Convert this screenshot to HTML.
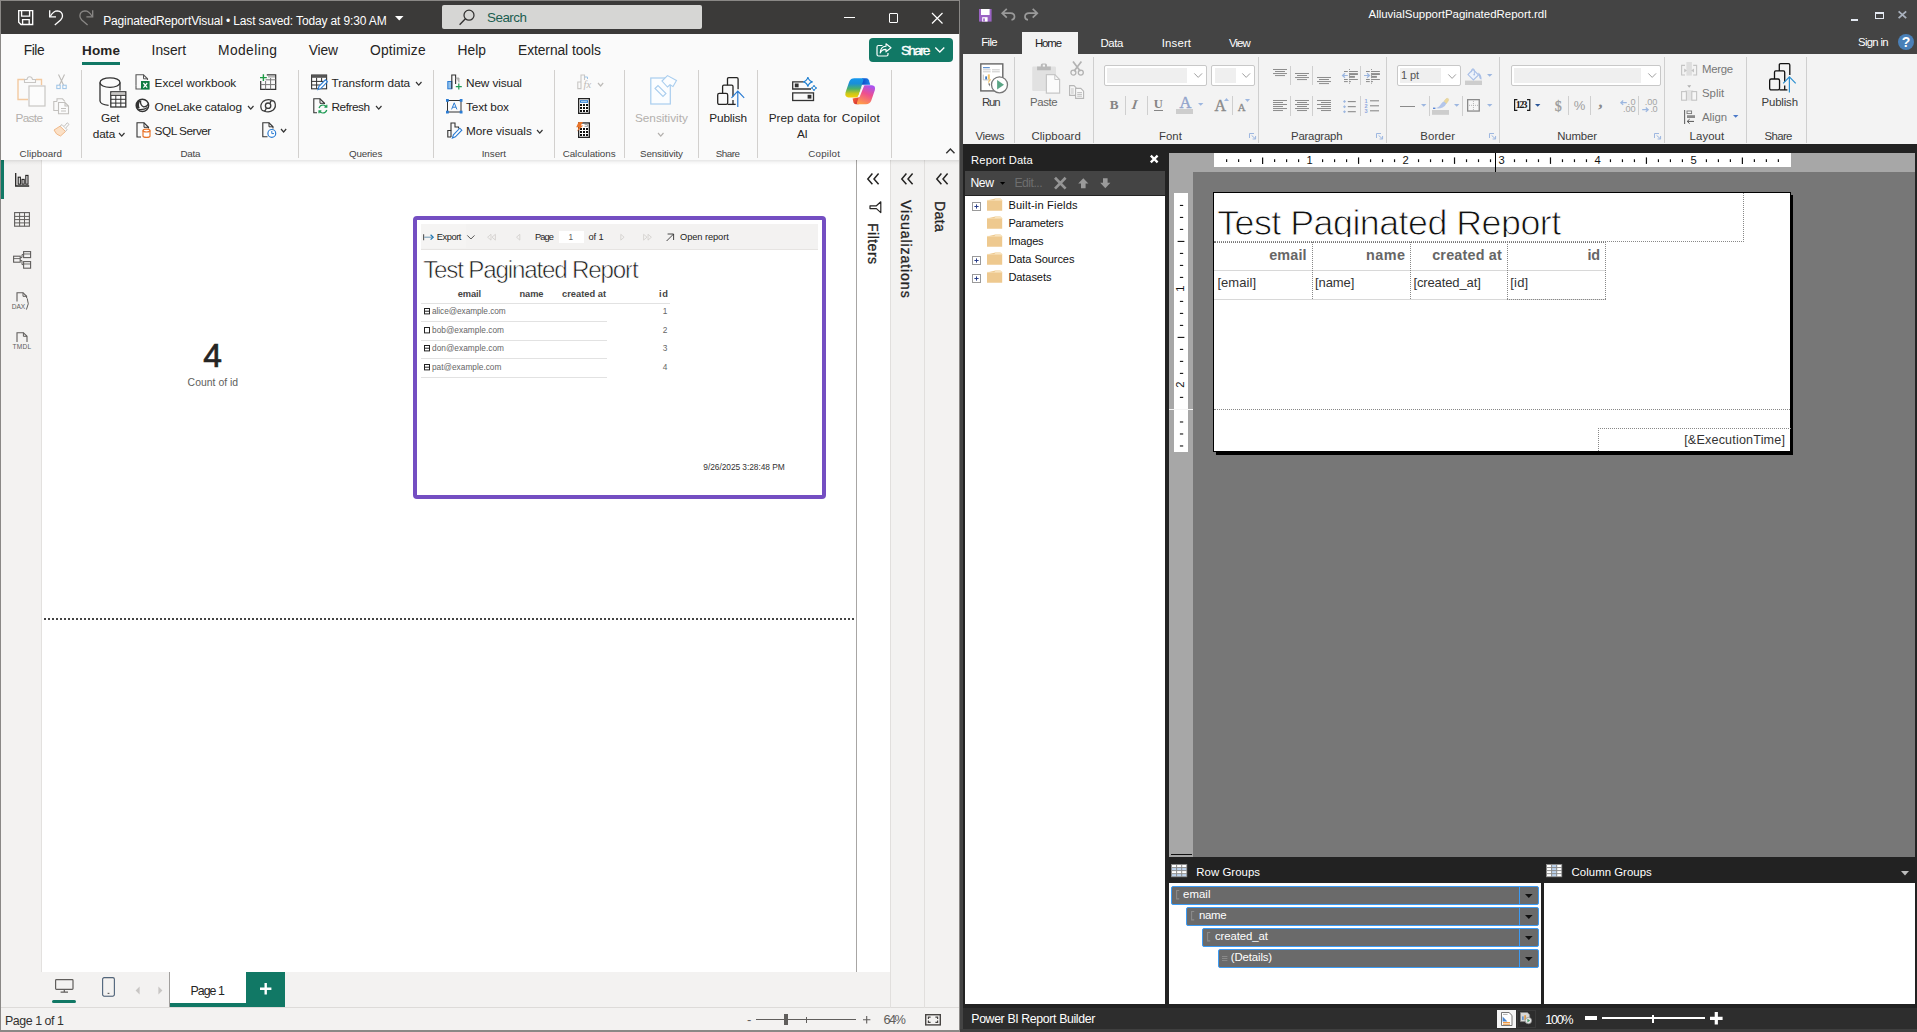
<!DOCTYPE html>
<html lang="en"><head><meta charset="utf-8"><title>Power BI Desktop and Report Builder</title>
<style>
html,body{margin:0;padding:0;}
body{width:1917px;height:1032px;position:relative;overflow:hidden;background:#fff;font-family:"Liberation Sans",sans-serif;}
#root{position:absolute;left:0;top:0;width:1917px;height:1032px;overflow:hidden;}
#root div,#root span,#root svg{position:absolute;}
.t{white-space:nowrap;line-height:1;}
svg{overflow:visible;}
</style></head><body><div id="root">
<div style="left:0px;top:0px;width:960px;height:1032px;background:#fff;"></div>
<div style="left:0px;top:0px;width:960px;height:34px;background:#3b3a39;"></div>
<div style="left:0px;top:0px;width:960px;height:1px;background:#8a8886;"></div>
<svg style="left:17.8px;top:9.9px;" width="15.4" height="15.2" viewBox="0 0 15.4 15.2"><path d="M0.7 0.7 H14.7 V14.5 H3 L0.7 12.2 Z M3.6 0.7 V6.2 H11.6 V0.7 M4.6 14.5 V9.6 H11.2 V14.5" fill="none" stroke="#fff" stroke-width="1.35"/></svg>
<svg style="left:49px;top:10px;" width="14.4" height="15.4" viewBox="0 0 14.4 15.4"><path d="M0.7 0.2 V6.9 H7" fill="none" stroke="#fff" stroke-width="1.3"/><path d="M1.4 6.2 Q4.4 0.9 8.4 0.9 Q13.5 1.4 13.5 6 Q13.5 8 11.6 10 L5.8 14.9" fill="none" stroke="#fff" stroke-width="1.3"/></svg>
<svg style="left:79px;top:10px;" width="14.4" height="15.4" viewBox="0 0 14.4 15.4"><path d="M13.7 0.2 V6.9 H7.4" fill="none" stroke="#8a8886" stroke-width="1.3"/><path d="M13 6.2 Q10 0.9 6 0.9 Q0.9 1.4 0.9 6 Q0.9 8 2.8 10 L8.6 14.9" fill="none" stroke="#8a8886" stroke-width="1.3"/></svg>
<span class="t" style="left:103.20px;top:15.00px;font-size:12.0px;color:#fff;font-family:'Liberation Sans',sans-serif;letter-spacing:-0.140px;">PaginatedReportVisual • Last saved: Today at 9:30 AM</span>
<svg style="left:394.5px;top:15.5px;" width="9" height="5" viewBox="0 0 9 5"><path d="M0 0 H8.5 L4.25 4.6 Z" fill="#fff"/></svg>
<div style="left:442px;top:5px;width:260px;height:24px;background:#d6d6d4;border-radius:2px;"></div>
<svg style="left:458px;top:8.6px;" width="18" height="17" viewBox="0 0 18 17"><circle cx="11" cy="6.2" r="5" fill="none" stroke="#323130" stroke-width="1.25"/><path d="M7.4 9.8 L1.6 15.8" stroke="#323130" stroke-width="1.35"/></svg>
<span class="t" style="left:487.00px;top:11.00px;font-size:13.4px;color:#1b5e50;font-family:'Liberation Sans',sans-serif;letter-spacing:-0.492px;">Search</span>
<div style="left:844px;top:17px;width:11px;height:1px;background:#fff;"></div>
<div style="left:888.5px;top:13px;width:9.5px;height:9.5px;border:1.2px solid #fff;box-sizing:border-box;border-radius:1px;"></div>
<svg style="left:932px;top:13px;" width="10.5" height="10.5" viewBox="0 0 10.5 10.5"><path d="M0 0 L10.5 10.5 M10.5 0 L0 10.5" stroke="#fff" stroke-width="1.2"/></svg>
<div style="left:1px;top:34px;width:958px;height:126px;background:#fafafa;"></div>
<span class="t" style="left:23.80px;top:44.00px;font-size:13.8px;color:#252423;font-family:'Liberation Sans',sans-serif;letter-spacing:-0.479px;">File</span>
<span class="t" style="left:82.00px;top:44.00px;font-size:13.5px;color:#252423;font-family:'Liberation Sans',sans-serif;font-weight:700;letter-spacing:0.164px;">Home</span>
<span class="t" style="left:151.60px;top:44.00px;font-size:13.8px;color:#252423;font-family:'Liberation Sans',sans-serif;letter-spacing:-0.023px;">Insert</span>
<span class="t" style="left:218.00px;top:44.00px;font-size:13.8px;color:#252423;font-family:'Liberation Sans',sans-serif;letter-spacing:0.428px;">Modeling</span>
<span class="t" style="left:308.80px;top:44.00px;font-size:13.8px;color:#252423;font-family:'Liberation Sans',sans-serif;letter-spacing:-0.154px;">View</span>
<span class="t" style="left:370.00px;top:44.00px;font-size:13.8px;color:#252423;font-family:'Liberation Sans',sans-serif;letter-spacing:0.165px;">Optimize</span>
<span class="t" style="left:457.40px;top:44.00px;font-size:13.8px;color:#252423;font-family:'Liberation Sans',sans-serif;letter-spacing:0.073px;">Help</span>
<span class="t" style="left:518.00px;top:44.00px;font-size:13.8px;color:#252423;font-family:'Liberation Sans',sans-serif;letter-spacing:-0.062px;">External tools</span>
<div style="left:82px;top:62px;width:38px;height:3px;background:#117865;"></div>
<div style="left:869px;top:38px;width:84px;height:24px;background:#117865;border-radius:4px;"></div>
<svg style="left:876px;top:42.5px;" width="16" height="14" viewBox="0 0 16 14"><path d="M6.5 2.5 H2.5 Q1 2.5 1 4 V11.5 Q1 13 2.5 13 H10.5 Q12 13 12 11.5 V10" fill="none" stroke="#fff" stroke-width="1.2"/><path d="M10 0.8 L15 4.8 L10 8.8 V6.4 Q6 6.2 4.2 10 Q4.4 3.6 10 3.2 Z" fill="none" stroke="#fff" stroke-width="1.1" stroke-linejoin="round"/></svg>
<span class="t" style="left:901.00px;top:44.00px;font-size:13.7px;color:#fff;font-family:'Liberation Sans',sans-serif;letter-spacing:-1.790px;-webkit-text-stroke:0.35px #fff;">Share</span>
<svg style="left:935.4px;top:47px;" width="10" height="6" viewBox="0 0 10 6"><path d="M0.3 0.5 L4.8 5 L9.3 0.5" fill="none" stroke="#fff" stroke-width="1.3"/></svg>
<div style="left:81.0px;top:70px;width:1px;height:88px;background:#d2d0ce;"></div>
<div style="left:298.1px;top:70px;width:1px;height:88px;background:#d2d0ce;"></div>
<div style="left:432.8px;top:70px;width:1px;height:88px;background:#d2d0ce;"></div>
<div style="left:554.0px;top:70px;width:1px;height:88px;background:#d2d0ce;"></div>
<div style="left:624.1px;top:70px;width:1px;height:88px;background:#d2d0ce;"></div>
<div style="left:698.3px;top:70px;width:1px;height:88px;background:#d2d0ce;"></div>
<div style="left:757.2px;top:70px;width:1px;height:88px;background:#d2d0ce;"></div>
<div style="left:890.5px;top:70px;width:1px;height:88px;background:#d2d0ce;"></div>
<span class="t" style="left:19.50px;top:149.00px;font-size:9.8px;color:#444;font-family:'Liberation Sans',sans-serif;letter-spacing:0.069px;">Clipboard</span>
<span class="t" style="left:180.50px;top:149.00px;font-size:9.8px;color:#444;font-family:'Liberation Sans',sans-serif;letter-spacing:-0.234px;">Data</span>
<span class="t" style="left:349.00px;top:149.00px;font-size:9.8px;color:#444;font-family:'Liberation Sans',sans-serif;letter-spacing:-0.169px;">Queries</span>
<span class="t" style="left:481.70px;top:149.00px;font-size:9.8px;color:#444;font-family:'Liberation Sans',sans-serif;letter-spacing:-0.042px;">Insert</span>
<span class="t" style="left:562.70px;top:149.00px;font-size:9.8px;color:#444;font-family:'Liberation Sans',sans-serif;letter-spacing:-0.044px;">Calculations</span>
<span class="t" style="left:640.00px;top:149.00px;font-size:9.8px;color:#444;font-family:'Liberation Sans',sans-serif;letter-spacing:-0.111px;">Sensitivity</span>
<span class="t" style="left:715.80px;top:149.00px;font-size:9.8px;color:#444;font-family:'Liberation Sans',sans-serif;letter-spacing:-0.488px;">Share</span>
<span class="t" style="left:808.30px;top:149.00px;font-size:9.8px;color:#444;font-family:'Liberation Sans',sans-serif;letter-spacing:0.199px;">Copilot</span>
<svg style="left:945.7px;top:147.5px;" width="9" height="6" viewBox="0 0 9 6"><path d="M0.3 5.2 L4.4 1 L8.5 5.2" fill="none" stroke="#333" stroke-width="1.4"/></svg>
<svg style="left:17px;top:76px;" width="29" height="31" viewBox="0 0 29 31"><path d="M8 3.5 H1 V23.5 H11" fill="none" stroke="#f3c9a0" stroke-width="1.4"/><path d="M19 3.5 H24.5 V9" fill="none" stroke="#f3c9a0" stroke-width="1.4"/><path d="M7.5 6.5 V3.5 H10 Q10.5 0.8 12.7 0.8 Q15 0.8 15.5 3.5 H18.5 V6.5 Z" fill="#fafafa" stroke="#c8c6c4" stroke-width="1.1"/><rect x="12" y="10" width="16" height="20" fill="#fcfcfc" stroke="#c8c6c4" stroke-width="1.2"/></svg>
<span class="t" style="left:15.50px;top:113.00px;font-size:11.8px;color:#b3b0ad;font-family:'Liberation Sans',sans-serif;letter-spacing:-0.669px;">Paste</span>
<svg style="left:55.5px;top:74px;" width="11" height="16" viewBox="0 0 11 16"><path d="M2.5 0.5 L7.5 11 M8.5 0.5 L3.5 11" stroke="#bdbbb8" stroke-width="1.1" fill="none"/><rect x="0.8" y="11.2" width="3.4" height="3.4" fill="none" stroke="#9cc3e6" stroke-width="1"/><rect x="6.8" y="11.2" width="3.4" height="3.4" fill="none" stroke="#9cc3e6" stroke-width="1"/></svg>
<svg style="left:53px;top:98px;" width="17" height="17" viewBox="0 0 17 17"><path d="M4 3.5 V0.8 H9.5 L12 3.5 M4 3.5 H0.8 V12.5 H5" fill="none" stroke="#c2c0bd" stroke-width="1.1"/><path d="M5.5 4.5 H12 L15.5 8 V15.8 H5.5 Z M12 4.5 V8 H15.5" fill="#fbfbfb" stroke="#c2c0bd" stroke-width="1.1"/><path d="M8 10.5 H13 M8 13 H13" stroke="#c2c0bd" stroke-width="1"/></svg>
<svg style="left:53px;top:122px;" width="17" height="15" viewBox="0 0 17 15"><path d="M1 8 L7 4.2 L12.5 9.5 L7.5 14 Q3 13 1 8 Z" fill="#fbe0c6" stroke="#f0b98a" stroke-width="1"/><path d="M7 4.2 L9 2.6 L14 7.6 L12.5 9.5" fill="none" stroke="#c2c0bd" stroke-width="1"/><path d="M11 4.6 L14.2 0.8 L16 2.4 L12.6 6.2" fill="#fbfbfb" stroke="#c2c0bd" stroke-width="1"/></svg>
<svg style="left:98.6px;top:76.5px;" width="29" height="31" viewBox="0 0 29 31"><path d="M1 5.6 V24 Q1.4 27.6 9.6 28.4" fill="none" stroke="#333" stroke-width="1.3"/><ellipse cx="11" cy="5.6" rx="10" ry="4.8" fill="none" stroke="#333" stroke-width="1.3"/><path d="M21 5.6 V13.4" fill="none" stroke="#333" stroke-width="1.3"/><rect x="11.8" y="14.8" width="15" height="15.2" fill="#fdfdfd" stroke="#333" stroke-width="1.3"/><rect x="12.5" y="15.5" width="13.6" height="2.4" fill="#c8c6c4"/><path d="M11.8 18.4 H26.8 M11.8 22.3 H26.8 M11.8 26.1 H26.8 M16.8 18.4 V30 M21.8 18.4 V30" stroke="#333" stroke-width="1"/></svg>
<span class="t" style="left:101.00px;top:113.00px;font-size:11.8px;color:#252423;font-family:'Liberation Sans',sans-serif;letter-spacing:-0.260px;">Get</span>
<span class="t" style="left:92.70px;top:129.00px;font-size:11.8px;color:#252423;font-family:'Liberation Sans',sans-serif;letter-spacing:-0.122px;">data</span>
<svg style="left:119px;top:132.6px;" width="5.5" height="3.2" viewBox="0 0 5.5 3.2"><path d="M0 0 L2.75 3.2 L5.5 0" fill="none" stroke="#333" stroke-width="1.2"/></svg>
<svg style="left:135.2px;top:74.3px;" width="15" height="16" viewBox="0 0 15 16"><path d="M1 11.5 V0.8 H8.5 L12.5 4.8 V6" fill="none" stroke="#555" stroke-width="1.1"/><path d="M8.5 0.8 V4.8 H12.5" fill="none" stroke="#555" stroke-width="1"/><path d="M1 11.5 V15 H6" fill="none" stroke="#555" stroke-width="1.1"/><rect x="6" y="7" width="8.6" height="8.6" fill="#107c41"/><path d="M8.4 9 L12.2 13.6 M12.2 9 L8.4 13.6" stroke="#fff" stroke-width="1.2"/></svg>
<span class="t" style="left:154.60px;top:78.00px;font-size:11.8px;color:#252423;font-family:'Liberation Sans',sans-serif;letter-spacing:-0.072px;">Excel workbook</span>
<svg style="left:134.6px;top:98.4px;" width="15.5" height="15.5" viewBox="0 0 15.5 15.5"><circle cx="7.4" cy="7.4" r="6.2" fill="none" stroke="#333" stroke-width="1.5"/><path d="M4.4 2.4 Q1.6 6 3.6 10.4" fill="none" stroke="#333" stroke-width="2.4"/><path d="M5.6 2.6 Q5 7.4 8.6 8.8 Q11.6 9 13.4 6.2" fill="none" stroke="#333" stroke-width="1.3"/><path d="M3.4 11.4 Q8 12.4 12.6 9.4" fill="none" stroke="#333" stroke-width="1.2"/></svg>
<span class="t" style="left:154.60px;top:102.00px;font-size:11.8px;color:#252423;font-family:'Liberation Sans',sans-serif;letter-spacing:-0.130px;">OneLake catalog</span>
<svg style="left:247.5px;top:106.2px;" width="5.5" height="3.2" viewBox="0 0 5.5 3.2"><path d="M0 0 L2.75 3.2 L5.5 0" fill="none" stroke="#333" stroke-width="1.2"/></svg>
<svg style="left:136px;top:122.3px;" width="15" height="16" viewBox="0 0 15 16"><path d="M5 15 H1 V0.8 H8 L12.5 5.3 V6.5" fill="none" stroke="#333" stroke-width="1.1"/><path d="M8 0.8 V5.3 H12.5" fill="none" stroke="#333" stroke-width="1"/><path d="M7 8.6 V14 Q7 15.4 10.5 15.4 Q14 15.4 14 14 V8.6" fill="#fff" stroke="#e8742a" stroke-width="1.2"/><ellipse cx="10.5" cy="8.6" rx="3.5" ry="1.4" fill="#fff" stroke="#e8742a" stroke-width="1.2"/></svg>
<span class="t" style="left:154.60px;top:126.00px;font-size:11.8px;color:#252423;font-family:'Liberation Sans',sans-serif;letter-spacing:-0.501px;">SQL Server</span>
<svg style="left:260px;top:74px;" width="16.4" height="16" viewBox="0 0 16.4 16"><path d="M6.8 0.8 H15.7 V15.4 H0.7 V7" fill="none" stroke="#333" stroke-width="1.2"/><path d="M8 2.6 H15" stroke="#b8b8b8" stroke-width="2"/><path d="M0.7 10.6 H15.7 M5.6 7 V15.4 M10.6 4 V15.4 M5.6 5.8 H15.7" stroke="#777" stroke-width="1"/><path d="M3.4 0.2 V7 M0 3.6 H6.8" stroke="#1f9b45" stroke-width="1.4"/></svg>
<svg style="left:260px;top:99px;" width="16.4" height="13.6" viewBox="0 0 16.4 13.6"><circle cx="8.1" cy="6.7" r="2.7" fill="none" stroke="#3a3a3a" stroke-width="1.3"/><path d="M12.2 1.4 Q7 -0.6 3 2.6 Q-0.4 6 1.4 10.2 Q2.6 12.6 5 11.6 Q6.4 10.8 5.6 9.4" fill="none" stroke="#3a3a3a" stroke-width="1.3"/><path d="M4 12 Q9.2 14.2 13.2 11 Q16.6 7.6 14.8 3.4 Q13.6 1 11.2 2 Q9.8 2.8 10.6 4.2" fill="none" stroke="#3a3a3a" stroke-width="1.3"/></svg>
<svg style="left:262px;top:122.3px;" width="15" height="16" viewBox="0 0 15 16"><path d="M5.5 14.8 H0.8 V0.8 H7 L11 4.8 V6.5" fill="none" stroke="#333" stroke-width="1.1"/><path d="M7 0.8 V4.8 H11" fill="none" stroke="#333" stroke-width="1"/><circle cx="9.8" cy="11.4" r="3.9" fill="#fff" stroke="#2b7cd3" stroke-width="1.2"/><path d="M9.8 9 V11.6 H12" fill="none" stroke="#2b7cd3" stroke-width="1"/></svg>
<svg style="left:281px;top:128.8px;" width="5.2" height="3" viewBox="0 0 5.2 3"><path d="M0 0 L2.6 3 L5.2 0" fill="none" stroke="#333" stroke-width="1.2"/></svg>
<svg style="left:310.8px;top:74px;" width="17" height="16" viewBox="0 0 17 16"><rect x="0.6" y="1" width="15" height="13.8" fill="#fcfcfc" stroke="#333" stroke-width="1.1"/><rect x="0.6" y="1" width="15" height="2.8" fill="#555"/><path d="M0.6 7.4 H15.6 M0.6 11 H9 M5.6 3.8 V14.8 M10.6 3.8 V8" stroke="#333" stroke-width="1"/><path d="M7 15.6 L8 12.4 L14.4 5.8 L16.4 7.8 L10 14.4 Z" fill="#fff" stroke="#2b7cd3" stroke-width="1.1"/></svg>
<span class="t" style="left:331.50px;top:78.00px;font-size:11.8px;color:#252423;font-family:'Liberation Sans',sans-serif;letter-spacing:-0.067px;">Transform data</span>
<svg style="left:416px;top:82px;" width="5.5" height="3.2" viewBox="0 0 5.5 3.2"><path d="M0 0 L2.75 3.2 L5.5 0" fill="none" stroke="#333" stroke-width="1.2"/></svg>
<svg style="left:312.7px;top:98.3px;" width="15" height="16" viewBox="0 0 15 16"><path d="M4 14.8 H0.8 V0.8 H7 L11.5 5.3 V6" fill="none" stroke="#333" stroke-width="1.1"/><path d="M7 0.8 V5.3 H11.5" fill="none" stroke="#333" stroke-width="1"/><path d="M6 10 Q7 7 10 7 Q12.4 7 13.4 9 M13.8 6.8 V9.2 H11.4" fill="none" stroke="#1f9b55" stroke-width="1.2"/><path d="M13.8 12 Q12.8 15 9.8 15 Q7.4 15 6.4 13 M6 15.2 V12.8 H8.4" fill="none" stroke="#1f9b55" stroke-width="1.2"/></svg>
<span class="t" style="left:331.50px;top:102.00px;font-size:11.8px;color:#252423;font-family:'Liberation Sans',sans-serif;letter-spacing:-0.470px;">Refresh</span>
<svg style="left:375.6px;top:106.2px;" width="5.5" height="3.2" viewBox="0 0 5.5 3.2"><path d="M0 0 L2.75 3.2 L5.5 0" fill="none" stroke="#333" stroke-width="1.2"/></svg>
<svg style="left:446.5px;top:74px;" width="16" height="16" viewBox="0 0 16 16"><rect x="0.8" y="7.5" width="4" height="7.3" fill="#8fc0ec" stroke="#2b7cd3" stroke-width="1"/><path d="M4.8 14.8 V1 H8.6 V10" fill="none" stroke="#333" stroke-width="1.1"/><path d="M8.6 4 H12 V8.5" fill="#c8c6c4" stroke="#999" stroke-width="0.8"/><path d="M11.8 9.6 V15.6 M8.8 12.6 H14.8" stroke="#1f9b55" stroke-width="1.2"/></svg>
<span class="t" style="left:466.00px;top:78.00px;font-size:11.8px;color:#252423;font-family:'Liberation Sans',sans-serif;letter-spacing:-0.117px;">New visual</span>
<svg style="left:446px;top:98.8px;" width="17" height="14.5" viewBox="0 0 17 14.5"><rect x="1.5" y="1.5" width="13.5" height="11.5" fill="none" stroke="#333" stroke-width="1"/><rect x="0" y="0" width="2.8" height="2.8" fill="#2b7cd3"/><rect x="13.7" y="0" width="2.8" height="2.8" fill="#2b7cd3"/><rect x="0" y="11.7" width="2.8" height="2.8" fill="#2b7cd3"/><rect x="13.7" y="11.7" width="2.8" height="2.8" fill="#2b7cd3"/><path d="M5.6 10.4 L8.25 3.8 L10.9 10.4 M6.6 8.2 H9.9" fill="none" stroke="#2b7cd3" stroke-width="1"/></svg>
<span class="t" style="left:466.00px;top:102.00px;font-size:11.8px;color:#252423;font-family:'Liberation Sans',sans-serif;letter-spacing:-0.135px;">Text box</span>
<svg style="left:446.5px;top:122px;" width="16" height="16.5" viewBox="0 0 16 16.5"><path d="M4 15 H0.8 V8.5 H4 V1 H8 V5 H11.5 V6.5" fill="none" stroke="#333" stroke-width="1.1"/><path d="M4 8.5 V15" stroke="#333" stroke-width="1.1"/><path d="M5.4 16 L6.4 12.8 L12.8 6.2 L14.8 8.2 L8.4 14.8 Z" fill="#fff" stroke="#2b7cd3" stroke-width="1.1"/></svg>
<span class="t" style="left:466.00px;top:126.00px;font-size:11.8px;color:#252423;font-family:'Liberation Sans',sans-serif;letter-spacing:-0.039px;">More visuals</span>
<svg style="left:536.8px;top:130px;" width="5.5" height="3.2" viewBox="0 0 5.5 3.2"><path d="M0 0 L2.75 3.2 L5.5 0" fill="none" stroke="#333" stroke-width="1.2"/></svg>
<svg style="left:577px;top:74px;" width="15" height="16" viewBox="0 0 15 16"><path d="M0.8 14.6 V8 H4 V14.6 Z M4 14.6 V1 H7.5 V6" fill="none" stroke="#c8c6c4" stroke-width="1.1"/><path d="M7.5 3 H10.5 V5" fill="none" stroke="#9cc3e6" stroke-width="1"/></svg>
<span class="t" style="left:583.50px;top:80.00px;font-size:10.5px;color:#bdbbb8;font-family:'Liberation Serif',serif;font-style:italic;">fx</span>
<svg style="left:598px;top:82.5px;" width="5.2" height="3" viewBox="0 0 5.2 3"><path d="M0 0 L2.6 3 L5.2 0" fill="none" stroke="#bdbbb8" stroke-width="1.2"/></svg>
<svg style="left:578px;top:98px;" width="12" height="16" viewBox="0 0 12 16"><rect x="0.65" y="0.65" width="10.7" height="14.7" fill="#fff" stroke="#222" stroke-width="1.3"/><rect x="2" y="2.2" width="8" height="2.6" fill="#2b7cd3"/><rect x="3" y="3" width="6" height="1" fill="#9cc8f0"/><g shape-rendering="crispEdges"><rect x="2" y="6" width="2" height="2" fill="#111"/><rect x="5" y="6" width="2" height="2" fill="#111"/><rect x="8" y="6" width="2" height="2" fill="#111"/><rect x="2" y="9" width="2" height="2" fill="#111"/><rect x="5" y="9" width="2" height="2" fill="#111"/><rect x="8" y="9" width="2" height="2" fill="#111"/><rect x="2" y="12" width="2" height="2" fill="#111"/><rect x="5" y="12" width="2" height="2" fill="#111"/><rect x="8" y="12" width="2" height="2" fill="#111"/></g></svg>
<svg style="left:576px;top:122px;" width="14" height="16" viewBox="0 0 14 16"><rect x="2.65" y="0.95" width="10.7" height="14.4" fill="#fff" stroke="#222" stroke-width="1.3"/><path d="M8.6 2.6 H11.6 V4.4 H8.6" fill="none" stroke="#888" stroke-width="0.8"/><g shape-rendering="crispEdges"><rect x="4" y="6" width="2" height="2" fill="#111"/><rect x="7" y="6" width="2" height="2" fill="#111"/><rect x="10" y="6" width="2" height="2" fill="#111"/><rect x="4" y="9" width="2" height="2" fill="#111"/><rect x="7" y="9" width="2" height="2" fill="#111"/><rect x="10" y="9" width="2" height="2" fill="#111"/><rect x="4" y="12" width="2" height="2" fill="#111"/><rect x="7" y="12" width="2" height="2" fill="#111"/><rect x="10" y="12" width="2" height="2" fill="#111"/></g><path d="M2.6 0 H7 L4.8 3.4 H7.2 L1.2 9.4 L2.6 5.2 H0.2 Z" fill="#e8742a"/></svg>
<svg style="left:650px;top:75px;" width="28" height="30" viewBox="0 0 28 30"><rect x="0.8" y="3" width="19.5" height="26" fill="#fbfdff" stroke="#a9cdee" stroke-width="1.2"/><path d="M5 13.5 L8 10.5 L16 18.5 L13 21.5 Z" fill="none" stroke="#a9cdee" stroke-width="1.1"/><path d="M12 6 L17.5 0.6 L26.5 5.5 L23 11.6 L20 9.8 L17.5 12 Z" fill="#fbfdff" stroke="#a9cdee" stroke-width="1.1"/></svg>
<span class="t" style="left:635.00px;top:113.00px;font-size:11.8px;color:#b3b0ad;font-family:'Liberation Sans',sans-serif;letter-spacing:-0.032px;">Sensitivity</span>
<svg style="left:658px;top:133px;" width="5.5" height="3.2" viewBox="0 0 5.5 3.2"><path d="M0 0 L2.75 3.2 L5.5 0" fill="none" stroke="#b3b0ad" stroke-width="1.2"/></svg>
<svg style="left:716.6px;top:77px;" width="28.4" height="30.6" viewBox="0 0 28.4 30.6"><path d="M10.5 8.2 V2 Q10.5 0.7 11.8 0.7 H19.8 Q21.1 0.7 21.1 2 V12.2" fill="none" stroke="#252423" stroke-width="1.3"/><path d="M5.6 16.3 V9.4 Q5.6 8.1 6.9 8.1 H14.7 Q16 8.1 16 9.4 V19.4 M16 23 V27.4" fill="none" stroke="#252423" stroke-width="1.3"/><rect x="0.7" y="16.3" width="10" height="11.1" rx="1.6" fill="none" stroke="#252423" stroke-width="1.3"/><path d="M10.7 27.4 H18.7" stroke="#252423" stroke-width="1.3"/><path d="M20.8 30 V14.2 M14.5 20.8 L20.8 14.1 L27.2 20.8" fill="none" stroke="#2b7cd3" stroke-width="1.2"/></svg>
<span class="t" style="left:709.30px;top:113.00px;font-size:11.8px;color:#252423;font-family:'Liberation Sans',sans-serif;letter-spacing:-0.167px;">Publish</span>
<svg style="left:792px;top:77px;" width="25" height="25" viewBox="0 0 25 25"><path d="M11.6 4.8 H0.7 V12 H19" fill="none" stroke="#333" stroke-width="1.3"/><rect x="2.8" y="6.5" width="3.8" height="3.8" fill="#333"/><rect x="0.7" y="15.9" width="20.8" height="7.6" fill="none" stroke="#333" stroke-width="1.3"/><rect x="15.6" y="17.8" width="3.8" height="3.8" fill="#333"/><path d="M15.9 0.2 Q16.7 4 20.6 4.9 Q16.7 5.8 15.9 9.6 Q15.1 5.8 11.2 4.9 Q15.1 4 15.9 0.2 Z" fill="#fafafa" stroke="#1f7fd0" stroke-width="1.1"/><path d="M22 8.2 Q22.5 10.5 24.8 11 Q22.5 11.5 22 13.8 Q21.5 11.5 19.2 11 Q21.5 10.5 22 8.2 Z" fill="#fafafa" stroke="#1f7fd0" stroke-width="1"/></svg>
<span class="t" style="left:768.70px;top:113.00px;font-size:11.8px;color:#252423;font-family:'Liberation Sans',sans-serif;letter-spacing:0.007px;">Prep data for</span>
<span class="t" style="left:797.00px;top:129.00px;font-size:11.8px;color:#252423;font-family:'Liberation Sans',sans-serif;letter-spacing:-0.349px;">AI</span>
<svg style="left:844.8px;top:77.7px;" width="30.4" height="26.6" viewBox="0 0 30.4 26.6"><defs><linearGradient id="cg1" x1="0" y1="0" x2="0" y2="1"><stop offset="0" stop-color="#1597ee"/><stop offset="0.28" stop-color="#1a8fd8"/><stop offset="0.55" stop-color="#4cb06a"/><stop offset="0.8" stop-color="#c9c81a"/><stop offset="1" stop-color="#f5cf0a"/></linearGradient><linearGradient id="cg2" x1="0" y1="0" x2="1" y2="0"><stop offset="0" stop-color="#0a3fc4"/><stop offset="1" stop-color="#1f86ea"/></linearGradient><linearGradient id="cg3" x1="0.7" y1="0" x2="0.3" y2="1"><stop offset="0" stop-color="#a853f2"/><stop offset="0.45" stop-color="#ee4f8e"/><stop offset="1" stop-color="#ff9c48"/></linearGradient><linearGradient id="cg4" x1="0" y1="0" x2="1" y2="1"><stop offset="0" stop-color="#ff6a3c"/><stop offset="1" stop-color="#c8262e"/></linearGradient></defs><path d="M17.2 0.3 H21.4 Q23.3 0.3 23.9 2.2 L25.3 6.8 H15.6 Z" fill="url(#cg2)"/><path d="M7.6 20.4 L14.9 19 L13.6 26.2 H10.8 Q9 26.2 8.5 24.4 Z" fill="url(#cg4)"/><path d="M9.4 0.3 H17.4 Q19 0.4 18.4 2.2 L13.6 17.4 Q12.8 19.4 10.6 19.4 H3.4 Q-0.4 19.2 0.5 14.6 L4.2 3.8 Q5.6 0.3 9.4 0.3 Z" fill="url(#cg1)"/><path d="M21 26.3 H13 Q11.4 26.2 12 24.4 L16.8 9.2 Q17.6 7.2 19.8 7.2 H27 Q30.8 7.4 29.9 12 L26.2 22.8 Q24.8 26.3 21 26.3 Z" fill="url(#cg3)"/><path d="M17.2 8.2 Q17.8 7.4 19.4 7.3 L18.6 9 L14.6 19 Q13.8 19.4 12.6 19.4 L13.4 17.8 Z" fill="#fafafa"/></svg>
<span class="t" style="left:841.70px;top:113.00px;font-size:11.8px;color:#252423;font-family:'Liberation Sans',sans-serif;letter-spacing:0.211px;">Copilot</span>
<div style="left:1px;top:160px;width:41px;height:848px;background:#f3f2f1;"></div>
<div style="left:41px;top:160px;width:1px;height:812px;background:#e3e1df;"></div>
<div style="left:1px;top:160px;width:3px;height:39px;background:#117865;"></div>
<svg style="left:15px;top:173.4px;" width="14.4" height="14" viewBox="0 0 14.4 14"><path d="M0.7 0 V13 H14.2" fill="none" stroke="#252423" stroke-width="1.3"/><rect x="3.2" y="4.2" width="2.2" height="7" fill="none" stroke="#252423" stroke-width="1.1"/><rect x="7" y="6.4" width="2.2" height="4.8" fill="none" stroke="#252423" stroke-width="1.1"/><rect x="10.8" y="2.4" width="2.2" height="8.8" fill="none" stroke="#252423" stroke-width="1.1"/></svg>
<svg style="left:14px;top:212.2px;" width="16" height="15" viewBox="0 0 16 15"><rect x="0.6" y="0.6" width="14.8" height="13.6" fill="none" stroke="#605e5c" stroke-width="1.1"/><path d="M0.6 4.4 H15.4 M0.6 7.6 H15.4 M0.6 10.9 H15.4 M5.6 0.6 V14.2 M10.5 0.6 V14.2" stroke="#605e5c" stroke-width="1"/></svg>
<svg style="left:13px;top:251px;" width="18.4" height="18.4" viewBox="0 0 18.4 18.4"><rect x="0.6" y="5.2" width="6.6" height="6" fill="none" stroke="#605e5c" stroke-width="1.1"/><rect x="10.6" y="0.6" width="7" height="6" fill="none" stroke="#605e5c" stroke-width="1.1"/><rect x="10.6" y="10.6" width="7" height="6.6" fill="none" stroke="#605e5c" stroke-width="1.1"/><path d="M10.6 3 H17.6 M10.6 13 H17.6 M0.6 7.6 H7.2" stroke="#605e5c" stroke-width="0.9"/><path d="M7.2 6.6 H9 V3.6 H10.6 M7.2 9.6 H9 V13.6 H10.6" fill="none" stroke="#605e5c" stroke-width="1"/></svg>
<svg style="left:15.6px;top:292px;" width="14" height="12" viewBox="0 0 14 12"><path d="M1 9.4 V0.7 H7 L10.6 4.3 V6" fill="none" stroke="#605e5c" stroke-width="1.1"/><path d="M7 0.7 V4.3 H10.6" fill="none" stroke="#605e5c" stroke-width="1"/></svg>
<span class="t" style="left:11.80px;top:304.00px;font-size:6.6px;color:#605e5c;font-family:'Liberation Sans',sans-serif;letter-spacing:-0.085px;">DAX</span>
<svg style="left:26px;top:297.6px;" width="3.6" height="12" viewBox="0 0 3.6 12"><path d="M1.2 0.3 Q3.8 5.6 0.4 11.6" fill="none" stroke="#605e5c" stroke-width="1"/></svg>
<svg style="left:16px;top:331.6px;" width="14" height="11" viewBox="0 0 14 11"><path d="M1 10 V0.7 H7.4 L11 4.3 V10" fill="none" stroke="#605e5c" stroke-width="1.1"/><path d="M7.4 0.7 V4.3 H11" fill="none" stroke="#605e5c" stroke-width="1"/></svg>
<span class="t" style="left:12.60px;top:344.00px;font-size:6.6px;color:#605e5c;font-family:'Liberation Sans',sans-serif;letter-spacing:0.211px;">TMDL</span>
<div style="left:44px;top:618px;width:810px;height:2px;background:repeating-linear-gradient(90deg,#444 0,#444 2px,transparent 2px,transparent 4px);"></div>
<span class="t" style="left:203.26px;top:339.00px;font-size:33.6px;color:#252423;font-family:'Liberation Sans',sans-serif;-webkit-text-stroke:0.7px #252423;">4</span>
<span class="t" style="left:187.60px;top:378.00px;font-size:10.4px;color:#605e5c;font-family:'Liberation Sans',sans-serif;letter-spacing:0.030px;">Count of id</span>
<div style="left:413px;top:215.8px;width:413px;height:283.2px;border:4px solid #744ec2;border-radius:4px;box-sizing:border-box;background:#fff;"></div>
<div style="left:421px;top:224px;width:396.5px;height:26px;background:#f3f2f1;border-bottom:1px solid #e6e4e2;box-sizing:border-box;"></div>
<div style="left:421px;top:224px;width:45px;height:24px;background:#f5f4f3;"></div>
<svg style="left:423px;top:234px;" width="11" height="6.4" viewBox="0 0 11 6.4"><path d="M0.6 0.2 V6.2" stroke="#555" stroke-width="1.1"/><path d="M1.2 3.2 H9" stroke="#7a9fb8" stroke-width="1.1"/><path d="M7.6 0.7 L10.2 3.2 L7.6 5.7" fill="none" stroke="#1f77b4" stroke-width="1.2"/></svg>
<span class="t" style="left:436.70px;top:233.00px;font-size:9.3px;color:#252423;font-family:'Liberation Sans',sans-serif;letter-spacing:-0.436px;">Export</span>
<svg style="left:466.7px;top:235px;" width="8" height="5" viewBox="0 0 8 5"><path d="M0.3 0.4 L3.9 4 L7.5 0.4" fill="none" stroke="#444" stroke-width="0.9"/></svg>
<svg style="left:487px;top:233.5px;" width="9" height="6.5" viewBox="0 0 9 6.5"><path d="M4 0.3 L0.6 3.2 L4 6.1 Z M8.4 0.3 L5 3.2 L8.4 6.1 Z" fill="none" stroke="#d0cecc" stroke-width="0.8"/></svg>
<svg style="left:515.5px;top:233.5px;" width="5" height="6.5" viewBox="0 0 5 6.5"><path d="M3.8 0.3 L0.5 3.2 L3.8 6.1 Z" fill="none" stroke="#d0cecc" stroke-width="0.8"/></svg>
<span class="t" style="left:535.00px;top:233.00px;font-size:9.3px;color:#252423;font-family:'Liberation Sans',sans-serif;letter-spacing:-0.907px;">Page</span>
<div style="left:559px;top:231px;width:25px;height:11.6px;background:#fff;"></div>
<span class="t" style="left:568.60px;top:234.00px;font-size:8.2px;color:#605e5c;font-family:'Liberation Sans',sans-serif;">1</span>
<span class="t" style="left:588.60px;top:233.00px;font-size:9.3px;color:#252423;font-family:'Liberation Sans',sans-serif;letter-spacing:-0.171px;">of 1</span>
<svg style="left:619.5px;top:233.5px;" width="5" height="6.5" viewBox="0 0 5 6.5"><path d="M0.8 0.3 L4.1 3.2 L0.8 6.1 Z" fill="none" stroke="#d0cecc" stroke-width="0.8"/></svg>
<svg style="left:642.6px;top:233.5px;" width="9" height="6.5" viewBox="0 0 9 6.5"><path d="M0.6 0.3 L4 3.2 L0.6 6.1 Z M5 0.3 L8.4 3.2 L5 6.1 Z" fill="none" stroke="#d0cecc" stroke-width="0.8"/></svg>
<svg style="left:665.8px;top:232.5px;" width="9" height="8.5" viewBox="0 0 9 8.5"><path d="M1.6 1 H7.6 V7 M7.6 1 L0.6 8" fill="none" stroke="#333" stroke-width="0.9"/></svg>
<span class="t" style="left:680.00px;top:233.00px;font-size:9.3px;color:#252423;font-family:'Liberation Sans',sans-serif;letter-spacing:-0.083px;">Open report</span>
<span class="t" style="left:423.20px;top:258.00px;font-size:24.2px;color:#1a1a1a;font-family:'Liberation Sans',sans-serif;letter-spacing:-1.193px;-webkit-text-stroke:0.6px #fff;">Test Paginated Report</span>
<span class="t" style="left:457.70px;top:290.00px;font-size:9.3px;color:#444;font-family:'Liberation Sans',sans-serif;font-weight:700;letter-spacing:-0.120px;">email</span>
<span class="t" style="left:519.50px;top:290.00px;font-size:9.3px;color:#444;font-family:'Liberation Sans',sans-serif;font-weight:700;letter-spacing:-0.098px;">name</span>
<span class="t" style="left:562.00px;top:290.00px;font-size:9.3px;color:#444;font-family:'Liberation Sans',sans-serif;font-weight:700;letter-spacing:0.007px;">created at</span>
<span class="t" style="left:659.00px;top:290.00px;font-size:9.3px;color:#444;font-family:'Liberation Sans',sans-serif;font-weight:700;letter-spacing:0.635px;">id</span>
<div style="left:421px;top:302.5px;width:248.7px;height:1px;background:#e2e2e2;"></div>
<svg style="left:424px;top:308.2px;" width="6" height="6.4" viewBox="0 0 6 6.4"><rect x="0.5" y="0.5" width="5" height="5.4" fill="#fff" stroke="#222" stroke-width="1"/><path d="M0.5 3.2 H5.5" stroke="#222" stroke-width="1"/></svg>
<span class="t" style="left:432.00px;top:307.00px;font-size:8.3px;color:#666;font-family:'Liberation Sans',sans-serif;letter-spacing:-0.072px;">alice@example.com</span>
<span class="t" style="left:662.78px;top:307.00px;font-size:8.3px;color:#666;font-family:'Liberation Sans',sans-serif;">1</span>
<div style="left:421px;top:320.8px;width:186.3px;height:1px;background:#e2e2e2;"></div>
<svg style="left:424px;top:327.2px;" width="6" height="6.4" viewBox="0 0 6 6.4"><rect x="0.5" y="0.5" width="5" height="5.4" fill="#fff" stroke="#222" stroke-width="1"/></svg>
<span class="t" style="left:432.00px;top:326.00px;font-size:8.3px;color:#666;font-family:'Liberation Sans',sans-serif;letter-spacing:0.026px;">bob@example.com</span>
<span class="t" style="left:662.78px;top:326.00px;font-size:8.3px;color:#666;font-family:'Liberation Sans',sans-serif;">2</span>
<div style="left:421px;top:339.5px;width:186.3px;height:1px;background:#e2e2e2;"></div>
<svg style="left:424px;top:345.2px;" width="6" height="6.4" viewBox="0 0 6 6.4"><rect x="0.5" y="0.5" width="5" height="5.4" fill="#fff" stroke="#222" stroke-width="1"/><path d="M0.5 3.2 H5.5" stroke="#222" stroke-width="1"/></svg>
<span class="t" style="left:432.00px;top:344.00px;font-size:8.3px;color:#666;font-family:'Liberation Sans',sans-serif;letter-spacing:0.026px;">don@example.com</span>
<span class="t" style="left:662.78px;top:344.00px;font-size:8.3px;color:#666;font-family:'Liberation Sans',sans-serif;">3</span>
<div style="left:421px;top:357.8px;width:186.3px;height:1px;background:#e2e2e2;"></div>
<svg style="left:424px;top:364.2px;" width="6" height="6.4" viewBox="0 0 6 6.4"><rect x="0.5" y="0.5" width="5" height="5.4" fill="#fff" stroke="#222" stroke-width="1"/><path d="M0.5 3.2 H5.5" stroke="#222" stroke-width="1"/></svg>
<span class="t" style="left:432.00px;top:363.00px;font-size:8.3px;color:#666;font-family:'Liberation Sans',sans-serif;letter-spacing:0.006px;">pat@example.com</span>
<span class="t" style="left:662.78px;top:363.00px;font-size:8.3px;color:#666;font-family:'Liberation Sans',sans-serif;">4</span>
<div style="left:421px;top:376.7px;width:186.3px;height:1px;background:#e2e2e2;"></div>
<span class="t" style="left:703.30px;top:463.00px;font-size:8.4px;color:#333;font-family:'Liberation Sans',sans-serif;letter-spacing:-0.051px;">9/26/2025 3:28:48 PM</span>
<div style="left:856px;top:160px;width:1px;height:812px;background:#a8a6a4;"></div>
<div style="left:857px;top:160px;width:33px;height:812px;background:#fff;"></div>
<div style="left:890px;top:160px;width:35px;height:848px;background:#f3f2f1;"></div>
<div style="left:924.5px;top:160px;width:35px;height:848px;background:#f3f2f1;"></div>
<div style="left:889.6px;top:160px;width:1px;height:848px;background:#e1dfdd;"></div>
<div style="left:924.2px;top:160px;width:1px;height:848px;background:#e1dfdd;"></div>
<svg style="left:867px;top:173px;" width="13" height="12" viewBox="0 0 13 12"><path d="M5.4 0.5 L0.8 5.9 L5.4 11.3 M11.6 0.5 L7 5.9 L11.6 11.3" fill="none" stroke="#252423" stroke-width="1.5"/></svg>
<svg style="left:901px;top:173px;" width="13" height="12" viewBox="0 0 13 12"><path d="M5.4 0.5 L0.8 5.9 L5.4 11.3 M11.6 0.5 L7 5.9 L11.6 11.3" fill="none" stroke="#252423" stroke-width="1.5"/></svg>
<svg style="left:936px;top:173px;" width="13" height="12" viewBox="0 0 13 12"><path d="M5.4 0.5 L0.8 5.9 L5.4 11.3 M11.6 0.5 L7 5.9 L11.6 11.3" fill="none" stroke="#252423" stroke-width="1.5"/></svg>
<svg style="left:868.5px;top:201px;" width="13" height="13" viewBox="0 0 13 13"><path d="M11.8 0.8 V11.6 L7.4 7.6 H1 V4.8 H7.4 Z" fill="none" stroke="#252423" stroke-width="1.2" stroke-linejoin="round"/></svg>
<span class="t" style="left:866.10px;top:222.80px;font-size:14.2px;color:#252423;font-family:'Liberation Sans',sans-serif;writing-mode:vertical-rl;letter-spacing:0.424px;-webkit-text-stroke:0.3px #252423;">Filters</span>
<span class="t" style="left:898.80px;top:200.00px;font-size:14.2px;color:#252423;font-family:'Liberation Sans',sans-serif;writing-mode:vertical-rl;letter-spacing:0.864px;-webkit-text-stroke:0.3px #252423;">Visualizations</span>
<span class="t" style="left:932.90px;top:201.00px;font-size:14.2px;color:#252423;font-family:'Liberation Sans',sans-serif;writing-mode:vertical-rl;letter-spacing:0.335px;-webkit-text-stroke:0.3px #252423;">Data</span>
<div style="left:1px;top:972px;width:958px;height:36px;background:#f3f2f1;"></div>
<div style="left:1px;top:1007px;width:958px;height:1px;background:#dddbd9;"></div>
<div style="left:1px;top:1008px;width:958px;height:23px;background:#f3f2f1;"></div>
<div style="left:889.6px;top:972px;width:1px;height:36px;background:#e1dfdd;"></div>
<div style="left:924.2px;top:972px;width:1px;height:36px;background:#e1dfdd;"></div>
<svg style="left:54.6px;top:979.3px;" width="19" height="14" viewBox="0 0 19 14"><rect x="0.6" y="0.6" width="17.4" height="9.8" rx="0.8" fill="none" stroke="#605e5c" stroke-width="1.2"/><path d="M9.3 10.4 V13 M5.6 13.2 H13" stroke="#605e5c" stroke-width="1.2"/></svg>
<div style="left:52px;top:999.6px;width:24px;height:3px;background:#117865;border-radius:1.5px;"></div>
<svg style="left:101.5px;top:977px;" width="13" height="20" viewBox="0 0 13 20"><rect x="0.6" y="0.6" width="11.8" height="18.6" rx="1.6" fill="none" stroke="#605e5c" stroke-width="1.1"/><rect x="0.6" y="0.6" width="11.8" height="18.6" rx="1.6" fill="none" stroke="#2b7cd3" stroke-width="0.5" opacity="0.6"/><path d="M5.6 16.4 H7.4" stroke="#605e5c" stroke-width="1.2"/></svg>
<svg style="left:135px;top:985.5px;" width="5" height="9" viewBox="0 0 5 9"><path d="M4.6 0.4 L0.6 4.4 L4.6 8.4 Z" fill="#c8c6c4"/></svg>
<svg style="left:157.5px;top:985.5px;" width="5" height="9" viewBox="0 0 5 9"><path d="M0.4 0.4 L4.4 4.4 L0.4 8.4 Z" fill="#c8c6c4"/></svg>
<div style="left:169.7px;top:972px;width:76px;height:35px;background:#fff;"></div>
<div style="left:169.2px;top:972px;width:1px;height:35px;background:#a19f9d;"></div>
<div style="left:169.7px;top:1003px;width:76px;height:4px;background:#117865;"></div>
<span class="t" style="left:190.50px;top:985.00px;font-size:12.4px;color:#252423;font-family:'Liberation Sans',sans-serif;letter-spacing:-1.000px;">Page 1</span>
<div style="left:245.6px;top:972px;width:39.4px;height:35px;background:#117865;"></div>
<svg style="left:259.6px;top:982.8px;" width="11.4" height="11.4" viewBox="0 0 11.4 11.4"><path d="M5.7 0 V11.4 M0 5.7 H11.4" stroke="#fff" stroke-width="2.4"/></svg>
<span class="t" style="left:5.00px;top:1015.00px;font-size:12.4px;color:#323130;font-family:'Liberation Sans',sans-serif;letter-spacing:-0.443px;">Page 1 of 1</span>
<span class="t" style="left:747.00px;top:1013.00px;font-size:13px;color:#605e5c;font-family:'Liberation Sans',sans-serif;">-</span>
<div style="left:756px;top:1019px;width:100px;height:1px;background:#605e5c;"></div>
<div style="left:784.3px;top:1014px;width:3.4px;height:11px;background:#605e5c;"></div>
<div style="left:806.3px;top:1016.5px;width:1px;height:6px;background:#605e5c;"></div>
<svg style="left:863px;top:1016px;" width="7.4" height="7.4" viewBox="0 0 7.4 7.4"><path d="M3.7 0 V7.4 M0 3.7 H7.4" stroke="#605e5c" stroke-width="1.1"/></svg>
<span class="t" style="left:883.60px;top:1014.00px;font-size:12.8px;color:#605e5c;font-family:'Liberation Sans',sans-serif;letter-spacing:-1.709px;">64%</span>
<svg style="left:925.1px;top:1014.1px;" width="16" height="11.6" viewBox="0 0 16 11.6"><rect x="0.7" y="0.7" width="14.6" height="10.2" fill="none" stroke="#484644" stroke-width="1.4"/><path d="M3.4 5 V3.2 H5.6 M10.4 3.2 H12.6 V5 M12.6 6.6 V8.4 H10.4 M5.6 8.4 H3.4 V6.6" fill="none" stroke="#484644" stroke-width="1.2"/></svg>
<div style="left:1px;top:160px;width:958px;height:5px;background:linear-gradient(rgba(0,0,0,0.10),rgba(0,0,0,0.03) 50%,rgba(0,0,0,0));"></div>
<div style="left:0px;top:0px;width:1px;height:1032px;background:#8a8886;"></div>
<div style="left:959px;top:0px;width:1px;height:1032px;background:#8a8886;"></div>
<div style="left:0px;top:1030.4px;width:960px;height:1.6px;background:#8a8886;"></div>
<div style="left:960px;top:0px;width:957px;height:1032px;background:#444444;"></div>
<svg style="left:978.8px;top:8.8px;" width="12.6" height="12.6" viewBox="0 0 12.6 12.6"><rect x="0" y="0" width="12.6" height="12.6" fill="#9b63c4"/><rect x="2" y="0" width="8.6" height="6" fill="#fff"/><rect x="3.2" y="8.2" width="5.4" height="4.4" fill="#fff"/><rect x="4.2" y="9.4" width="1.6" height="3.2" fill="#9b63c4"/></svg>
<svg style="left:1001px;top:8px;" width="14.5" height="12.5" viewBox="0 0 14.5 12.5"><path d="M5.8 0.8 L1.2 5.2 L5.8 9.6 M1.4 5.2 H9.5 Q13.5 5.4 13.5 8.8 Q13.5 11.4 10.5 11.8" fill="none" stroke="#9a9a9a" stroke-width="1.7"/></svg>
<svg style="left:1024px;top:8px;" width="14.5" height="12.5" viewBox="0 0 14.5 12.5"><path d="M8.7 0.8 L13.3 5.2 L8.7 9.6 M13.1 5.2 H5 Q1 5.4 1 8.8 Q1 11.4 4 11.8" fill="none" stroke="#9a9a9a" stroke-width="1.7"/></svg>
<span class="t" style="left:1368.50px;top:9.00px;font-size:11.5px;color:#fff;font-family:'Liberation Sans',sans-serif;letter-spacing:-0.021px;">AlluvialSupportPaginatedReport.rdl</span>
<div style="left:1851px;top:18.6px;width:7.4px;height:2.4px;background:#e4e9f2;"></div>
<div style="left:1875px;top:12.3px;width:9.2px;height:6.7px;border:1.3px solid #e4e9f2;border-top-width:2.6px;box-sizing:border-box;"></div>
<svg style="left:1898.4px;top:11.4px;" width="8.8" height="7.6" viewBox="0 0 8.8 7.6"><path d="M0.6 0.4 L8.2 7.2 M8.2 0.4 L0.6 7.2" stroke="#aab2be" stroke-width="1.8"/></svg>
<div style="left:1022px;top:32px;width:56.4px;height:22.5px;background:#f3f3f3;"></div>
<span class="t" style="left:981.30px;top:37.00px;font-size:11.4px;color:#fff;font-family:'Liberation Sans',sans-serif;letter-spacing:-0.690px;">File</span>
<span class="t" style="left:1035.00px;top:38.00px;font-size:11.4px;color:#222;font-family:'Liberation Sans',sans-serif;letter-spacing:-1.137px;">Home</span>
<span class="t" style="left:1100.40px;top:38.00px;font-size:11.4px;color:#fff;font-family:'Liberation Sans',sans-serif;letter-spacing:-0.360px;">Data</span>
<span class="t" style="left:1161.80px;top:38.00px;font-size:11.4px;color:#fff;font-family:'Liberation Sans',sans-serif;letter-spacing:0.138px;">Insert</span>
<span class="t" style="left:1229.00px;top:38.00px;font-size:11.4px;color:#fff;font-family:'Liberation Sans',sans-serif;letter-spacing:-0.935px;">View</span>
<span class="t" style="left:1858.00px;top:37.00px;font-size:11.4px;color:#fff;font-family:'Liberation Sans',sans-serif;letter-spacing:-0.710px;">Sign in</span>
<div style="left:1897.8px;top:33.6px;width:16.2px;height:16.2px;background:#4a80b8;border-radius:50%;"></div>
<span class="t" style="left:1901.72px;top:35.00px;font-size:14px;color:#fff;font-family:'Liberation Sans',sans-serif;font-weight:700;">?</span>
<div style="left:963px;top:54px;width:954px;height:89.6px;background:#f3f3f3;"></div>
<div style="left:963px;top:143.6px;width:954px;height:7px;background:#222222;"></div>
<div style="left:1013.9px;top:57px;width:1px;height:86px;background:#cfcfcf;"></div>
<div style="left:1093.1px;top:57px;width:1px;height:86px;background:#cfcfcf;"></div>
<div style="left:1258.1px;top:57px;width:1px;height:86px;background:#cfcfcf;"></div>
<div style="left:1386.1px;top:57px;width:1px;height:86px;background:#cfcfcf;"></div>
<div style="left:1499.1px;top:57px;width:1px;height:86px;background:#cfcfcf;"></div>
<div style="left:1664.1px;top:57px;width:1px;height:86px;background:#cfcfcf;"></div>
<div style="left:1746.3px;top:57px;width:1px;height:86px;background:#cfcfcf;"></div>
<div style="left:1806.2px;top:57px;width:1px;height:86px;background:#cfcfcf;"></div>
<span class="t" style="left:975.50px;top:131.00px;font-size:11.4px;color:#3c3c3c;font-family:'Liberation Sans',sans-serif;letter-spacing:-0.326px;">Views</span>
<span class="t" style="left:1031.40px;top:131.00px;font-size:11.4px;color:#3c3c3c;font-family:'Liberation Sans',sans-serif;letter-spacing:0.076px;">Clipboard</span>
<span class="t" style="left:1159.00px;top:131.00px;font-size:11.4px;color:#3c3c3c;font-family:'Liberation Sans',sans-serif;">Font</span>
<span class="t" style="left:1291.00px;top:131.00px;font-size:11.4px;color:#3c3c3c;font-family:'Liberation Sans',sans-serif;letter-spacing:-0.205px;">Paragraph</span>
<span class="t" style="left:1420.30px;top:131.00px;font-size:11.4px;color:#3c3c3c;font-family:'Liberation Sans',sans-serif;letter-spacing:0.097px;">Border</span>
<span class="t" style="left:1557.30px;top:131.00px;font-size:11.4px;color:#3c3c3c;font-family:'Liberation Sans',sans-serif;letter-spacing:-0.169px;">Number</span>
<span class="t" style="left:1689.60px;top:131.00px;font-size:11.4px;color:#3c3c3c;font-family:'Liberation Sans',sans-serif;letter-spacing:0.074px;">Layout</span>
<span class="t" style="left:1764.60px;top:131.00px;font-size:11.4px;color:#3c3c3c;font-family:'Liberation Sans',sans-serif;letter-spacing:-0.655px;">Share</span>
<svg style="left:1248.6px;top:133.4px;" width="7.4" height="6.6" viewBox="0 0 7.4 6.6"><path d="M0.5 5 V0.5 H5" fill="none" stroke="#9db7e0" stroke-width="1"/><path d="M2.6 2.4 L6.4 5.8 M6.6 3 V6 H3.6" fill="none" stroke="#9db7e0" stroke-width="1"/></svg>
<svg style="left:1376.2px;top:133.4px;" width="7.4" height="6.6" viewBox="0 0 7.4 6.6"><path d="M0.5 5 V0.5 H5" fill="none" stroke="#9db7e0" stroke-width="1"/><path d="M2.6 2.4 L6.4 5.8 M6.6 3 V6 H3.6" fill="none" stroke="#9db7e0" stroke-width="1"/></svg>
<svg style="left:1489px;top:133.4px;" width="7.4" height="6.6" viewBox="0 0 7.4 6.6"><path d="M0.5 5 V0.5 H5" fill="none" stroke="#9db7e0" stroke-width="1"/><path d="M2.6 2.4 L6.4 5.8 M6.6 3 V6 H3.6" fill="none" stroke="#9db7e0" stroke-width="1"/></svg>
<svg style="left:1654.4px;top:133.4px;" width="7.4" height="6.6" viewBox="0 0 7.4 6.6"><path d="M0.5 5 V0.5 H5" fill="none" stroke="#9db7e0" stroke-width="1"/><path d="M2.6 2.4 L6.4 5.8 M6.6 3 V6 H3.6" fill="none" stroke="#9db7e0" stroke-width="1"/></svg>
<svg style="left:980px;top:62.7px;" width="28" height="30" viewBox="0 0 28 30"><rect x="0.8" y="0.9" width="22" height="27" fill="#fff" stroke="#666" stroke-width="1.4"/><path d="M3 4.7 H9.8" stroke="#3b78c4" stroke-width="1"/><path d="M3 6.8 H10.6 M3 8.8 H10.6 M12 6.8 H19.8 M12 8.8 H19.8" stroke="#c4c4c4" stroke-width="0.9"/><path d="M3.3 11.6 V16.9 H10.4" fill="none" stroke="#b8b8b8" stroke-width="0.9"/><rect x="5.2" y="13.4" width="1.8" height="3" fill="#3b78c4"/><rect x="7.8" y="11.4" width="2" height="5" fill="#f2c46c"/><path d="M8.4 19.6 Q9.2 17.2 10.6 16.4" fill="none" stroke="#f2c46c" stroke-width="1.2"/><path d="M8.2 20.6 L9.6 23.4 L10 20.6 Z" fill="#666"/><circle cx="19.5" cy="21.8" r="8" fill="#fff" stroke="#777" stroke-width="1.3"/><path d="M17.1 17 L24 21.8 L17.1 26.6 Z" fill="#5aa585"/></svg>
<span class="t" style="left:982.00px;top:97.00px;font-size:11.4px;color:#3c3c3c;font-family:'Liberation Sans',sans-serif;letter-spacing:-1.157px;">Run</span>
<svg style="left:1032px;top:62.7px;" width="28" height="31" viewBox="0 0 28 31"><rect x="0.2" y="3.5" width="23.8" height="24.5" rx="1.2" fill="#e1e1e1"/><path d="M5.1 7.2 V3.5 H8.8 V2 Q8.8 0.4 10.4 0.4 H13.4 Q15 0.4 15 2 V3.5 H18.8 V7.2 Z" fill="#b9b9b9"/><rect x="10.8" y="1.6" width="2.2" height="2" fill="#f3f3f3"/><path d="M14.4 11.7 H22.8 L27.6 16.5 V30.2 H14.4 Z" fill="#fbfbfb" stroke="#c6c6c6" stroke-width="1.2"/><path d="M22.8 11.7 V16.5 H27.6" fill="none" stroke="#c6c6c6" stroke-width="1"/></svg>
<span class="t" style="left:1030.00px;top:97.00px;font-size:11.4px;color:#666;font-family:'Liberation Sans',sans-serif;letter-spacing:-0.363px;">Paste</span>
<svg style="left:1069.8px;top:61.2px;" width="14.5" height="15.2" viewBox="0 0 14.5 15.2"><path d="M3 0.4 L10.4 10.2 M11.4 0.4 L4 10.2" stroke="#b2b2b2" stroke-width="1.7" fill="none"/><circle cx="3.4" cy="11.6" r="2.5" fill="none" stroke="#b2b2b2" stroke-width="1.3"/><circle cx="10.8" cy="11.6" r="2.5" fill="none" stroke="#b2b2b2" stroke-width="1.3"/></svg>
<svg style="left:1069px;top:85.2px;" width="15.2" height="14" viewBox="0 0 15.2 14"><path d="M0.6 0.6 H5 L7 2.6 V10.4 H0.6 Z" fill="#f6f6f6" stroke="#b6b6b6" stroke-width="1.1"/><path d="M2 4 H4.8 M2 6 H4.8 M2 8 H4.8" stroke="#c0c0c0" stroke-width="0.9"/><path d="M6.6 3.4 H11.8 L14.6 6.2 V13.4 H6.6 Z" fill="#f8f8f8" stroke="#b6b6b6" stroke-width="1.1"/><path d="M8.2 7.6 H13 M8.2 9.4 H13 M8.2 11.2 H13" stroke="#b8b8b8" stroke-width="0.9"/></svg>
<div style="left:1104px;top:65px;width:103px;height:20.6px;background:#fff;border:1px solid #c8c8c8;border-radius:2px;box-sizing:border-box;"></div>
<div style="left:1107.2px;top:68px;width:80px;height:14.600000000000001px;background:#efefef;"></div>
<svg style="left:1193.6px;top:73.4px;" width="8.4" height="5" viewBox="0 0 8.4 5"><path d="M0.3 0.4 L4.2 4.4 L8.1 0.4" fill="none" stroke="#a0a0a0" stroke-width="1"/></svg>
<div style="left:1211.4px;top:65px;width:43.8px;height:20.6px;background:#fff;border:1px solid #c8c8c8;border-radius:2px;box-sizing:border-box;"></div>
<div style="left:1214.6000000000001px;top:68px;width:21px;height:14.600000000000001px;background:#efefef;"></div>
<svg style="left:1241.8px;top:73.4px;" width="8.4" height="5" viewBox="0 0 8.4 5"><path d="M0.3 0.4 L4.2 4.4 L8.1 0.4" fill="none" stroke="#a0a0a0" stroke-width="1"/></svg>
<span class="t" style="left:1109.80px;top:98.00px;font-size:13.2px;color:#858585;font-family:'Liberation Serif',serif;font-weight:700;">B</span>
<div style="left:1125.4px;top:95.5px;width:1px;height:19.5px;background:#cfcfcf;"></div>
<span class="t" style="left:1132.20px;top:98.00px;font-size:13.2px;color:#858585;font-family:'Liberation Serif',serif;font-weight:700;font-style:italic;transform:skewX(-8deg);">I</span>
<div style="left:1147.2px;top:95.5px;width:1px;height:19.5px;background:#cfcfcf;"></div>
<span class="t" style="left:1153.80px;top:98.00px;font-size:12.6px;color:#858585;font-family:'Liberation Serif',serif;font-weight:700;">U</span>
<div style="left:1154px;top:110.2px;width:9px;height:1px;background:#858585;"></div>
<span class="t" style="left:1179.60px;top:95.00px;font-size:16.4px;color:#93a5cc;font-family:'Liberation Serif',serif;-webkit-text-stroke:0.4px #93a5cc;">A</span>
<div style="left:1176.1px;top:108.9px;width:16.8px;height:4.8px;background:#cdcdcd;"></div>
<svg style="left:1198px;top:103px;" width="5.4" height="2.8" viewBox="0 0 5.4 2.8"><path d="M0 0 H5.4 L2.7 2.8 Z" fill="#9db7e0"/></svg>
<span class="t" style="left:1214.60px;top:98.00px;font-size:16px;color:#8a8a8a;font-family:'Liberation Serif',serif;-webkit-text-stroke:0.4px #8a8a8a;">A</span>
<svg style="left:1224.2px;top:98.2px;" width="5" height="3" viewBox="0 0 5 3"><path d="M0 3 L2.5 0 L5 3 Z" fill="#9db7e0"/></svg>
<div style="left:1232.2px;top:95.5px;width:1px;height:19.5px;background:#cfcfcf;"></div>
<span class="t" style="left:1237.80px;top:102.00px;font-size:10.8px;color:#8a8a8a;font-family:'Liberation Serif',serif;-webkit-text-stroke:0.3px #8a8a8a;">A</span>
<svg style="left:1245.2px;top:99px;" width="5" height="3" viewBox="0 0 5 3"><path d="M0 0 H5 L2.5 3 Z" fill="#9db7e0"/></svg>
<svg style="left:1273px;top:69px;" width="14" height="9.12" viewBox="0 0 14 9.12"><path d="M0.0 0.5 H14.0" stroke="#8c8c8c" stroke-width="1"/><path d="M2.0 2.53 H12.0" stroke="#8c8c8c" stroke-width="1"/><path d="M0.0 4.56 H14.0" stroke="#8c8c8c" stroke-width="1"/><path d="M2.0 6.59 H12.0" stroke="#8c8c8c" stroke-width="1"/></svg>
<svg style="left:1295px;top:73px;" width="14" height="9.12" viewBox="0 0 14 9.12"><path d="M0.0 0.5 H14.0" stroke="#8c8c8c" stroke-width="1"/><path d="M2.0 2.53 H12.0" stroke="#8c8c8c" stroke-width="1"/><path d="M0.0 4.56 H14.0" stroke="#8c8c8c" stroke-width="1"/><path d="M2.0 6.59 H12.0" stroke="#8c8c8c" stroke-width="1"/></svg>
<svg style="left:1317px;top:77px;" width="14" height="9.12" viewBox="0 0 14 9.12"><path d="M0.0 0.5 H14.0" stroke="#8c8c8c" stroke-width="1"/><path d="M2.0 2.53 H12.0" stroke="#8c8c8c" stroke-width="1"/><path d="M0.0 4.56 H14.0" stroke="#8c8c8c" stroke-width="1"/><path d="M2.0 6.59 H12.0" stroke="#8c8c8c" stroke-width="1"/></svg>
<div style="left:1289.9px;top:66px;width:1px;height:19.4px;background:#cfcfcf;"></div>
<div style="left:1289.9px;top:96px;width:1px;height:19.8px;background:#cfcfcf;"></div>
<div style="left:1312.1px;top:66px;width:1px;height:19.4px;background:#cfcfcf;"></div>
<div style="left:1312.1px;top:96px;width:1px;height:19.8px;background:#cfcfcf;"></div>
<div style="left:1360.0px;top:66px;width:1px;height:19.4px;background:#cfcfcf;"></div>
<div style="left:1360.0px;top:96px;width:1px;height:19.8px;background:#cfcfcf;"></div>
<svg style="left:1342px;top:69px;" width="16" height="15" viewBox="0 0 16 15"><path d="M7.5 0 V15" stroke="#8c8c8c" stroke-width="0.9" stroke-dasharray="1 1.05"/><path d="M2 2.5 H5.8 M7.2 2.5 H15.9 M2 10.5 H5.8 M7.2 10.5 H15.9 M2 12.6 H5.8 M7.2 12.6 H8.9" stroke="#8c8c8c" stroke-width="1"/><rect x="7.2" y="4.1" width="8.7" height="1.9" fill="#8c8c8c"/><rect x="7.2" y="6.9" width="5.7" height="1.9" fill="#8c8c8c"/><path d="M5.8 6.5 H0.6 M3 4.2 L0.5 6.5 L3 8.8" fill="none" stroke="#9db7e0" stroke-width="1.2"/></svg>
<svg style="left:1364px;top:69px;" width="16" height="15" viewBox="0 0 16 15"><path d="M7.5 0 V15" stroke="#8c8c8c" stroke-width="0.9" stroke-dasharray="1 1.05"/><path d="M2 2.5 H5.8 M7.2 2.5 H15.9 M2 10.5 H5.8 M7.2 10.5 H15.9 M2 12.6 H5.8 M7.2 12.6 H8.9" stroke="#8c8c8c" stroke-width="1"/><rect x="7.2" y="4.1" width="8.7" height="1.9" fill="#8c8c8c"/><rect x="7.2" y="6.9" width="5.7" height="1.9" fill="#8c8c8c"/><path d="M0 6.5 H5.4 M3 4.2 L5.5 6.5 L3 8.8" fill="none" stroke="#9db7e0" stroke-width="1.2"/></svg>
<svg style="left:1273px;top:100px;" width="14" height="13.059999999999999" viewBox="0 0 14 13.059999999999999"><path d="M0 0.5 H14" stroke="#8c8c8c" stroke-width="1"/><path d="M0 2.51 H10" stroke="#8c8c8c" stroke-width="1"/><path d="M0 4.52 H14" stroke="#8c8c8c" stroke-width="1"/><path d="M0 6.529999999999999 H10" stroke="#8c8c8c" stroke-width="1"/><path d="M0 8.54 H14" stroke="#8c8c8c" stroke-width="1"/><path d="M0 10.549999999999999 H10" stroke="#8c8c8c" stroke-width="1"/></svg>
<svg style="left:1295px;top:100px;" width="14" height="13.059999999999999" viewBox="0 0 14 13.059999999999999"><path d="M0.0 0.5 H14.0" stroke="#8c8c8c" stroke-width="1"/><path d="M2.0 2.51 H12.0" stroke="#8c8c8c" stroke-width="1"/><path d="M0.0 4.52 H14.0" stroke="#8c8c8c" stroke-width="1"/><path d="M2.0 6.529999999999999 H12.0" stroke="#8c8c8c" stroke-width="1"/><path d="M0.0 8.54 H14.0" stroke="#8c8c8c" stroke-width="1"/><path d="M2.0 10.549999999999999 H12.0" stroke="#8c8c8c" stroke-width="1"/></svg>
<svg style="left:1317px;top:100px;" width="14" height="13.059999999999999" viewBox="0 0 14 13.059999999999999"><path d="M0 0.5 H14" stroke="#8c8c8c" stroke-width="1"/><path d="M4 2.51 H14" stroke="#8c8c8c" stroke-width="1"/><path d="M0 4.52 H14" stroke="#8c8c8c" stroke-width="1"/><path d="M4 6.529999999999999 H14" stroke="#8c8c8c" stroke-width="1"/><path d="M0 8.54 H14" stroke="#8c8c8c" stroke-width="1"/><path d="M4 10.549999999999999 H14" stroke="#8c8c8c" stroke-width="1"/></svg>
<svg style="left:1343.2px;top:99.8px;" width="14" height="13.4" viewBox="0 0 14 13.4"><path d="M0 1.6 L1.5 0.10000000000000009 L3 1.6 L1.5 3.1 Z" fill="#9db7e0"/><path d="M4.8 1.6 H12.8" stroke="#8a8a8a" stroke-width="1.1"/><path d="M0 6.65 L1.5 5.15 L3 6.65 L1.5 8.15 Z" fill="#9db7e0"/><path d="M4.8 6.65 H12.8" stroke="#8a8a8a" stroke-width="1.1"/><path d="M0 11.7 L1.5 10.2 L3 11.7 L1.5 13.2 Z" fill="#9db7e0"/><path d="M4.8 11.7 H12.8" stroke="#8a8a8a" stroke-width="1.1"/></svg>
<svg style="left:1370px;top:99.8px;" width="10" height="12" viewBox="0 0 10 12"><path d="M0 0.8 H9" stroke="#8a8a8a" stroke-width="1.1"/><path d="M0 5.8 H9" stroke="#8a8a8a" stroke-width="1.1"/><path d="M0 10.8 H9" stroke="#8a8a8a" stroke-width="1.1"/></svg>
<span class="t" style="left:1364.60px;top:99.00px;font-size:5.6px;color:#8fa8de;font-family:'Liberation Sans',sans-serif;font-weight:700;">1</span>
<span class="t" style="left:1364.60px;top:104.00px;font-size:5.6px;color:#8fa8de;font-family:'Liberation Sans',sans-serif;font-weight:700;">2</span>
<span class="t" style="left:1364.60px;top:109.00px;font-size:5.6px;color:#8fa8de;font-family:'Liberation Sans',sans-serif;font-weight:700;">3</span>
<div style="left:1397px;top:65.3px;width:63.8px;height:20.3px;background:#fff;border:1px solid #c8c8c8;border-radius:2px;box-sizing:border-box;"></div>
<div style="left:1400px;top:68px;width:41px;height:15px;background:#efefef;"></div>
<span class="t" style="left:1401.00px;top:70.00px;font-size:11px;color:#555;font-family:'Liberation Sans',sans-serif;letter-spacing:-0.116px;">1 pt</span>
<svg style="left:1448px;top:73.6px;" width="8.2" height="5" viewBox="0 0 8.2 5"><path d="M0.3 0.4 L4.1 4.4 L7.9 0.4" fill="none" stroke="#a0a0a0" stroke-width="1"/></svg>
<svg style="left:1465px;top:67.6px;" width="17.4" height="17" viewBox="0 0 17.4 17"><rect x="0" y="12.6" width="17" height="4.4" fill="#cdcdcd"/><path d="M8 1.4 L13.6 7 L8.4 12 L3 6.6 Z" fill="#eef3fb" stroke="#a9bfe6" stroke-width="1.1"/><path d="M6.6 4.2 V1.6 Q8 -0.2 9.4 1.6 V6" fill="none" stroke="#a9bfe6" stroke-width="0.9"/><circle cx="9.2" cy="6.6" r="0.9" fill="#a9bfe6"/><path d="M13 4.6 Q16.6 6 16.6 11.6 Q14.2 11.4 14 7.6 Z" fill="#a9bfe6"/></svg>
<svg style="left:1486.8px;top:74px;" width="5.4" height="2.8" viewBox="0 0 5.4 2.8"><path d="M0 0 H5.4 L2.7 2.8 Z" fill="#9db7e0"/></svg>
<div style="left:1400px;top:105.6px;width:15px;height:1px;background:#8a8a8a;"></div>
<svg style="left:1420.6px;top:104.4px;" width="5.4" height="2.8" viewBox="0 0 5.4 2.8"><path d="M0 0 H5.4 L2.7 2.8 Z" fill="#9db7e0"/></svg>
<div style="left:1429px;top:96px;width:1px;height:19.8px;background:#cfcfcf;"></div>
<svg style="left:1432px;top:98.2px;" width="18" height="17" viewBox="0 0 18 17"><rect x="0" y="12" width="17" height="4.8" fill="#cdcdcd"/><path d="M3.4 10 Q6.6 10 8.6 6.6 Q10 4 12.2 3.2 L14.4 5.6 Q13.6 8 10.6 9.4 Q7 11 3.4 10 Z" fill="#b4c6ea"/><path d="M12 3.2 L14 0.8 Q15.4 -0.2 16.4 0.8 Q17 1.8 16.2 3 L14.4 5.6 Z" fill="#ecd89c" stroke="#d6c48c" stroke-width="0.4"/><path d="M1 9.6 H3.4 V11 H1 Z" fill="#5b87d6"/></svg>
<svg style="left:1454px;top:104.4px;" width="5.4" height="2.8" viewBox="0 0 5.4 2.8"><path d="M0 0 H5.4 L2.7 2.8 Z" fill="#9db7e0"/></svg>
<div style="left:1462px;top:96px;width:1px;height:19.8px;background:#cfcfcf;"></div>
<svg style="left:1467.2px;top:99.2px;" width="13" height="12.8" viewBox="0 0 13 12.8"><rect x="0.65" y="0.65" width="11.6" height="11.4" fill="#f7f7f7" stroke="#8a8a8a" stroke-width="1.3"/><path d="M6.45 2 V11" stroke="#a8a8a8" stroke-width="0.9" stroke-dasharray="0.9 1.1"/><path d="M2 6.35 H11" stroke="#a8a8a8" stroke-width="0.9" stroke-dasharray="0.9 1.1"/></svg>
<svg style="left:1486.8px;top:104.4px;" width="5.4" height="2.8" viewBox="0 0 5.4 2.8"><path d="M0 0 H5.4 L2.7 2.8 Z" fill="#9db7e0"/></svg>
<div style="left:1511.2px;top:65px;width:149.6px;height:20.6px;background:#fff;border:1px solid #c8c8c8;border-radius:2px;box-sizing:border-box;"></div>
<div style="left:1514.4px;top:68px;width:126.6px;height:14.6px;background:#efefef;"></div>
<svg style="left:1647.6px;top:73.4px;" width="8.4" height="5" viewBox="0 0 8.4 5"><path d="M0.3 0.4 L4.2 4.4 L8.1 0.4" fill="none" stroke="#a0a0a0" stroke-width="1"/></svg>
<svg style="left:1513.8px;top:99px;" width="16.4" height="12" viewBox="0 0 16.4 12"><path d="M3.4 0.6 H0.6 V11.4 H3.4 M13 0.6 H15.8 V11.4 H13" fill="none" stroke="#1a1a1a" stroke-width="1.2"/></svg>
<span class="t" style="left:1515.80px;top:100.00px;font-size:10px;color:#1a1a1a;font-family:'Liberation Serif',serif;font-weight:700;letter-spacing:-1.600px;">123</span>
<svg style="left:1534.8px;top:104px;" width="5.4" height="2.8" viewBox="0 0 5.4 2.8"><path d="M0 0 H5.4 L2.7 2.8 Z" fill="#2b579a"/></svg>
<span class="t" style="left:1554.80px;top:100.00px;font-size:14px;color:#9c9c9c;font-family:'Liberation Serif',serif;-webkit-text-stroke:0.3px #9c9c9c;">$</span>
<div style="left:1568px;top:95.5px;width:1px;height:19.5px;background:#cfcfcf;"></div>
<span class="t" style="left:1573.80px;top:99.00px;font-size:13px;color:#a0a0a0;font-family:'Liberation Sans',sans-serif;">%</span>
<div style="left:1590px;top:95.5px;width:1px;height:19.5px;background:#cfcfcf;"></div>
<span class="t" style="left:1599.00px;top:93.00px;font-size:17px;color:#8a8a8a;font-family:'Liberation Serif',serif;font-weight:700;transform:rotate(8deg);">,</span>
<span class="t" style="left:1627.40px;top:98.00px;font-size:9.2px;color:#a4a4a4;font-family:'Liberation Sans',sans-serif;letter-spacing:0.527px;">.0</span>
<span class="t" style="left:1623.00px;top:105.00px;font-size:9.2px;color:#a4a4a4;font-family:'Liberation Sans',sans-serif;letter-spacing:-0.095px;">.00</span>
<svg style="left:1620px;top:99.8px;" width="7" height="5.4" viewBox="0 0 7 5.4"><path d="M6.8 2.7 H1 M3.2 0.5 L0.8 2.7 L3.2 4.9" fill="none" stroke="#9db7e0" stroke-width="1.2"/></svg>
<div style="left:1638.4px;top:95.5px;width:1px;height:19.5px;background:#cfcfcf;"></div>
<span class="t" style="left:1644.80px;top:98.00px;font-size:9.2px;color:#a4a4a4;font-family:'Liberation Sans',sans-serif;letter-spacing:-0.095px;">.00</span>
<span class="t" style="left:1650.40px;top:105.00px;font-size:9.2px;color:#a4a4a4;font-family:'Liberation Sans',sans-serif;letter-spacing:-0.473px;">.0</span>
<svg style="left:1642px;top:107px;" width="7" height="5.4" viewBox="0 0 7 5.4"><path d="M0.2 2.7 H6 M3.8 0.5 L6.2 2.7 L3.8 4.9" fill="none" stroke="#9db7e0" stroke-width="1.2"/></svg>
<svg style="left:1681px;top:62.2px;" width="16" height="14" viewBox="0 0 16 14"><rect x="5.4" y="0" width="5.5" height="13.6" fill="#dedede"/><path d="M4 3.4 H0.6 V13 H4 M12.2 3.4 H15.6 V13 H12.2" fill="none" stroke="#c4c4c4" stroke-width="1.1"/><path d="M3.2 6.4 L6 8.4 L3.2 10.4 Z M13 6.4 L10.2 8.4 L13 10.4 Z" fill="#c4c4c4"/></svg>
<span class="t" style="left:1702.00px;top:64.00px;font-size:11.4px;color:#777;font-family:'Liberation Sans',sans-serif;letter-spacing:-0.278px;">Merge</span>
<svg style="left:1681px;top:85px;" width="16" height="16" viewBox="0 0 16 16"><rect x="4" y="5" width="8.2" height="10.6" fill="#e4e4e4"/><rect x="0.6" y="6.6" width="4.8" height="8.6" fill="#f6f6f6" stroke="#c4c4c4" stroke-width="1.1"/><rect x="10.8" y="6.6" width="4.8" height="8.6" fill="#f6f6f6" stroke="#c4c4c4" stroke-width="1.1"/><path d="M6.2 0.2 H10.2 L8.2 2.8 Z" fill="#b0b0b0"/></svg>
<span class="t" style="left:1702.00px;top:88.00px;font-size:11.4px;color:#777;font-family:'Liberation Sans',sans-serif;letter-spacing:0.006px;">Split</span>
<svg style="left:1684px;top:110.4px;" width="12" height="14" viewBox="0 0 12 14"><path d="M0.6 0 V14" stroke="#666" stroke-width="1.1"/><rect x="3" y="1" width="4.6" height="2.6" fill="none" stroke="#777" stroke-width="0.9"/><rect x="3" y="5.2" width="8" height="2.8" fill="#8a8a8a"/><path d="M10 11.4 H3.4 M5.6 9.2 L3.2 11.4 L5.6 13.6" fill="none" stroke="#555" stroke-width="1"/></svg>
<span class="t" style="left:1702.00px;top:112.00px;font-size:11.4px;color:#777;font-family:'Liberation Sans',sans-serif;letter-spacing:-0.087px;">Align</span>
<svg style="left:1732.7px;top:115.2px;" width="5.4" height="2.8" viewBox="0 0 5.4 2.8"><path d="M0 0 H5.4 L2.7 2.8 Z" fill="#4a78c8"/></svg>
<svg style="left:1769px;top:63.4px;" width="28" height="30" viewBox="0 0 28 30"><path d="M10.3 8 V1.9 Q10.3 0.65 11.6 0.65 H19.5 Q20.8 0.65 20.8 1.9 V12" fill="none" stroke="#111" stroke-width="1.3"/><path d="M5.5 16 V9.2 Q5.5 7.95 6.8 7.95 H14.4 Q15.7 7.95 15.7 9.2 V19 M15.7 22.6 V26.9" fill="none" stroke="#111" stroke-width="1.3"/><rect x="0.65" y="16" width="9.9" height="10.9" rx="1.6" fill="none" stroke="#111" stroke-width="1.3"/><path d="M10.5 26.9 H18.4" stroke="#111" stroke-width="1.3"/><path d="M20.4 29.4 V13.9 M14.2 20.4 L20.4 13.8 L26.7 20.4" fill="none" stroke="#2b8fd0" stroke-width="1.2"/></svg>
<span class="t" style="left:1761.60px;top:97.00px;font-size:11.4px;color:#3c3c3c;font-family:'Liberation Sans',sans-serif;letter-spacing:-0.165px;">Publish</span>
<div style="left:963px;top:150.6px;width:206px;height:856px;background:#222222;"></div>
<div style="left:965px;top:171.2px;width:200.4px;height:23.6px;background:#444444;"></div>
<span class="t" style="left:971.10px;top:155.00px;font-size:11.2px;color:#fff;font-family:'Liberation Sans',sans-serif;letter-spacing:0.141px;">Report Data</span>
<svg style="left:1150px;top:155.2px;" width="8.4" height="8" viewBox="0 0 8.4 8"><path d="M0.8 0.6 L7.6 7.4 M7.6 0.6 L0.8 7.4" stroke="#fff" stroke-width="2.3"/></svg>
<span class="t" style="left:970.40px;top:177.00px;font-size:12.2px;color:#fff;font-family:'Liberation Sans',sans-serif;letter-spacing:-0.403px;">New</span>
<svg style="left:1000px;top:182.2px;" width="5.2" height="2.8" viewBox="0 0 5.2 2.8"><path d="M0 0 H5.2 L2.6 2.8 Z" fill="#000"/></svg>
<span class="t" style="left:1014.40px;top:177.00px;font-size:12.2px;color:#6e6e6e;font-family:'Liberation Sans',sans-serif;letter-spacing:-0.482px;">Edit...</span>
<svg style="left:1053.8px;top:177px;" width="12.6" height="12.4" viewBox="0 0 12.6 12.4"><path d="M1 0.8 L11.6 11.6 M11.6 0.8 L1 11.6" stroke="#959595" stroke-width="2.7"/></svg>
<svg style="left:1077.5px;top:177.6px;" width="10.6" height="10.4" viewBox="0 0 10.6 10.4"><path d="M5.3 0.2 L10.4 5.6 H7.6 V10.2 H3 V5.6 H0.2 Z" fill="#9a9a9a"/></svg>
<svg style="left:1100px;top:177.6px;" width="10.6" height="10.4" viewBox="0 0 10.6 10.4"><path d="M5.3 10.2 L10.4 4.8 H7.6 V0.2 H3 V4.8 H0.2 Z" fill="#9a9a9a"/></svg>
<div style="left:965px;top:196px;width:200.4px;height:808.2px;background:#fff;"></div>
<svg style="left:972px;top:202.0px;" width="9" height="9" viewBox="0 0 9 9"><rect x="0.5" y="0.5" width="8" height="8" fill="#fff" stroke="#9a9a9a" stroke-width="1"/><path d="M2.4 4.5 H6.6 M4.5 2.4 V6.6" stroke="#2b3f8a" stroke-width="1"/></svg>
<svg style="left:987px;top:198.0px;" width="15.2" height="13" viewBox="0 0 15.2 13"><path d="M0 2.4 L8.4 0.6 H13.4 L15.2 2.2 V12.8 H0 Z" fill="#eec98f"/><path d="M0 2.4 H15.2" stroke="#f6dcae" stroke-width="0.8"/><path d="M8.6 0.6 H13.4 L15.2 2.2 H7.4 Z" fill="#f8e4c0"/></svg>
<span class="t" style="left:1008.40px;top:200.00px;font-size:11.1px;color:#111;font-family:'Liberation Sans',sans-serif;letter-spacing:0.191px;">Built-in Fields</span>
<svg style="left:987px;top:216.0px;" width="15.2" height="13" viewBox="0 0 15.2 13"><path d="M0 2.4 L8.4 0.6 H13.4 L15.2 2.2 V12.8 H0 Z" fill="#eec98f"/><path d="M0 2.4 H15.2" stroke="#f6dcae" stroke-width="0.8"/><path d="M8.6 0.6 H13.4 L15.2 2.2 H7.4 Z" fill="#f8e4c0"/></svg>
<span class="t" style="left:1008.40px;top:218.00px;font-size:11.1px;color:#111;font-family:'Liberation Sans',sans-serif;letter-spacing:-0.252px;">Parameters</span>
<svg style="left:987px;top:234.0px;" width="15.2" height="13" viewBox="0 0 15.2 13"><path d="M0 2.4 L8.4 0.6 H13.4 L15.2 2.2 V12.8 H0 Z" fill="#eec98f"/><path d="M0 2.4 H15.2" stroke="#f6dcae" stroke-width="0.8"/><path d="M8.6 0.6 H13.4 L15.2 2.2 H7.4 Z" fill="#f8e4c0"/></svg>
<span class="t" style="left:1008.40px;top:236.00px;font-size:11.1px;color:#111;font-family:'Liberation Sans',sans-serif;letter-spacing:-0.220px;">Images</span>
<svg style="left:972px;top:256.0px;" width="9" height="9" viewBox="0 0 9 9"><rect x="0.5" y="0.5" width="8" height="8" fill="#fff" stroke="#9a9a9a" stroke-width="1"/><path d="M2.4 4.5 H6.6 M4.5 2.4 V6.6" stroke="#2b3f8a" stroke-width="1"/></svg>
<svg style="left:987px;top:252.0px;" width="15.2" height="13" viewBox="0 0 15.2 13"><path d="M0 2.4 L8.4 0.6 H13.4 L15.2 2.2 V12.8 H0 Z" fill="#eec98f"/><path d="M0 2.4 H15.2" stroke="#f6dcae" stroke-width="0.8"/><path d="M8.6 0.6 H13.4 L15.2 2.2 H7.4 Z" fill="#f8e4c0"/></svg>
<span class="t" style="left:1008.40px;top:254.00px;font-size:11.1px;color:#111;font-family:'Liberation Sans',sans-serif;letter-spacing:-0.105px;">Data Sources</span>
<svg style="left:972px;top:274.0px;" width="9" height="9" viewBox="0 0 9 9"><rect x="0.5" y="0.5" width="8" height="8" fill="#fff" stroke="#9a9a9a" stroke-width="1"/><path d="M2.4 4.5 H6.6 M4.5 2.4 V6.6" stroke="#2b3f8a" stroke-width="1"/></svg>
<svg style="left:987px;top:270.0px;" width="15.2" height="13" viewBox="0 0 15.2 13"><path d="M0 2.4 L8.4 0.6 H13.4 L15.2 2.2 V12.8 H0 Z" fill="#eec98f"/><path d="M0 2.4 H15.2" stroke="#f6dcae" stroke-width="0.8"/><path d="M8.6 0.6 H13.4 L15.2 2.2 H7.4 Z" fill="#f8e4c0"/></svg>
<span class="t" style="left:1008.40px;top:272.00px;font-size:11.1px;color:#111;font-family:'Liberation Sans',sans-serif;letter-spacing:-0.101px;">Datasets</span>
<div style="left:1169px;top:150.6px;width:748px;height:706.6px;background:#777777;"></div>
<div style="left:1169px;top:150.6px;width:748px;height:2.4px;background:#222222;"></div>
<div style="left:1914.6px;top:150.6px;width:2.4px;height:856px;background:#222222;"></div>
<div style="left:1168.8px;top:152.8px;width:746.2px;height:19.2px;background:#a7a7a7;"></div>
<div style="left:1214px;top:152.8px;width:577px;height:14.2px;background:#fff;"></div>
<svg style="left:1214px;top:153px;" width="577" height="13.6" viewBox="0 0 577 13.6"><path d="M12.5 6.3 V9.1" stroke="#111" stroke-width="1.2"/><path d="M24.5 6.3 V9.1" stroke="#111" stroke-width="1.2"/><path d="M36.5 6.3 V9.1" stroke="#111" stroke-width="1.2"/><path d="M48.5 4.4 V10.9" stroke="#111" stroke-width="1.2"/><path d="M60.5 6.3 V9.1" stroke="#111" stroke-width="1.2"/><path d="M72.5 6.3 V9.1" stroke="#111" stroke-width="1.2"/><path d="M84.5 6.3 V9.1" stroke="#111" stroke-width="1.2"/><path d="M108.5 6.3 V9.1" stroke="#111" stroke-width="1.2"/><path d="M120.5 6.3 V9.1" stroke="#111" stroke-width="1.2"/><path d="M132.5 6.3 V9.1" stroke="#111" stroke-width="1.2"/><path d="M144.5 4.4 V10.9" stroke="#111" stroke-width="1.2"/><path d="M156.5 6.3 V9.1" stroke="#111" stroke-width="1.2"/><path d="M168.5 6.3 V9.1" stroke="#111" stroke-width="1.2"/><path d="M180.5 6.3 V9.1" stroke="#111" stroke-width="1.2"/><path d="M204.5 6.3 V9.1" stroke="#111" stroke-width="1.2"/><path d="M216.5 6.3 V9.1" stroke="#111" stroke-width="1.2"/><path d="M228.5 6.3 V9.1" stroke="#111" stroke-width="1.2"/><path d="M240.5 4.4 V10.9" stroke="#111" stroke-width="1.2"/><path d="M252.5 6.3 V9.1" stroke="#111" stroke-width="1.2"/><path d="M264.5 6.3 V9.1" stroke="#111" stroke-width="1.2"/><path d="M276.5 6.3 V9.1" stroke="#111" stroke-width="1.2"/><path d="M300.5 6.3 V9.1" stroke="#111" stroke-width="1.2"/><path d="M312.5 6.3 V9.1" stroke="#111" stroke-width="1.2"/><path d="M324.5 6.3 V9.1" stroke="#111" stroke-width="1.2"/><path d="M336.5 4.4 V10.9" stroke="#111" stroke-width="1.2"/><path d="M348.5 6.3 V9.1" stroke="#111" stroke-width="1.2"/><path d="M360.5 6.3 V9.1" stroke="#111" stroke-width="1.2"/><path d="M372.5 6.3 V9.1" stroke="#111" stroke-width="1.2"/><path d="M396.5 6.3 V9.1" stroke="#111" stroke-width="1.2"/><path d="M408.5 6.3 V9.1" stroke="#111" stroke-width="1.2"/><path d="M420.5 6.3 V9.1" stroke="#111" stroke-width="1.2"/><path d="M432.5 4.4 V10.9" stroke="#111" stroke-width="1.2"/><path d="M444.5 6.3 V9.1" stroke="#111" stroke-width="1.2"/><path d="M456.5 6.3 V9.1" stroke="#111" stroke-width="1.2"/><path d="M468.5 6.3 V9.1" stroke="#111" stroke-width="1.2"/><path d="M492.5 6.3 V9.1" stroke="#111" stroke-width="1.2"/><path d="M504.5 6.3 V9.1" stroke="#111" stroke-width="1.2"/><path d="M516.5 6.3 V9.1" stroke="#111" stroke-width="1.2"/><path d="M528.5 4.4 V10.9" stroke="#111" stroke-width="1.2"/><path d="M540.5 6.3 V9.1" stroke="#111" stroke-width="1.2"/><path d="M552.5 6.3 V9.1" stroke="#111" stroke-width="1.2"/><path d="M564.5 6.3 V9.1" stroke="#111" stroke-width="1.2"/></svg>
<span class="t" style="left:1306.49px;top:155.00px;font-size:11.2px;color:#111;font-family:'Liberation Sans',sans-serif;">1</span>
<span class="t" style="left:1402.49px;top:155.00px;font-size:11.2px;color:#111;font-family:'Liberation Sans',sans-serif;">2</span>
<span class="t" style="left:1498.49px;top:155.00px;font-size:11.2px;color:#111;font-family:'Liberation Sans',sans-serif;">3</span>
<span class="t" style="left:1594.49px;top:155.00px;font-size:11.2px;color:#111;font-family:'Liberation Sans',sans-serif;">4</span>
<span class="t" style="left:1690.49px;top:155.00px;font-size:11.2px;color:#111;font-family:'Liberation Sans',sans-serif;">5</span>
<div style="left:1495px;top:153px;width:1px;height:19px;background:#000;"></div>
<div style="left:1168.8px;top:152.8px;width:24.4px;height:704.2px;background:#a7a7a7;"></div>
<div style="left:1174px;top:193px;width:14.2px;height:259px;background:#fff;"></div>
<svg style="left:1174px;top:193px;" width="13.8" height="259" viewBox="0 0 13.8 259"><path d="M5.9 12.4 H9.2" stroke="#111" stroke-width="1.1"/><path d="M5.9 24.4 H9.2" stroke="#111" stroke-width="1.1"/><path d="M5.9 36.4 H9.2" stroke="#111" stroke-width="1.1"/><path d="M3.6 48.4 H10.4" stroke="#111" stroke-width="1.1"/><path d="M5.9 60.4 H9.2" stroke="#111" stroke-width="1.1"/><path d="M5.9 72.4 H9.2" stroke="#111" stroke-width="1.1"/><path d="M5.9 84.4 H9.2" stroke="#111" stroke-width="1.1"/><path d="M5.9 108.4 H9.2" stroke="#111" stroke-width="1.1"/><path d="M5.9 120.4 H9.2" stroke="#111" stroke-width="1.1"/><path d="M5.9 132.4 H9.2" stroke="#111" stroke-width="1.1"/><path d="M3.6 144.4 H10.4" stroke="#111" stroke-width="1.1"/><path d="M5.9 156.4 H9.2" stroke="#111" stroke-width="1.1"/><path d="M5.9 168.4 H9.2" stroke="#111" stroke-width="1.1"/><path d="M5.9 180.4 H9.2" stroke="#111" stroke-width="1.1"/><path d="M5.9 204.4 H9.2" stroke="#111" stroke-width="1.1"/><path d="M5.9 229.0 H9.2" stroke="#111" stroke-width="1.1"/><path d="M5.9 241.0 H9.2" stroke="#111" stroke-width="1.1"/><path d="M5.9 253.0 H9.2" stroke="#111" stroke-width="1.1"/></svg>
<span class="t" style="left:1175.4px;top:283.0px;font-size:11.2px;color:#111;transform:rotate(-90deg);transform-origin:center;width:11.2px;height:11.2px;text-align:center;">1</span>
<span class="t" style="left:1175.4px;top:379.0px;font-size:11.2px;color:#111;transform:rotate(-90deg);transform-origin:center;width:11.2px;height:11.2px;text-align:center;">2</span>
<div style="left:1168.8px;top:409px;width:24.4px;height:1.4px;background:#f4f4f4;"></div>
<div style="left:1171px;top:853.8px;width:21px;height:1.2px;background:#111;"></div>
<div style="left:1216.4px;top:195.4px;width:577px;height:259.4px;background:#000;"></div>
<div style="left:1213.4px;top:192.4px;width:578px;height:260px;background:#fff;border:1px solid #000;box-sizing:border-box;"></div>
<div style="left:1214.4px;top:193.4px;width:529.4px;height:48.8px;border-right:1px dotted #888;border-bottom:1px dotted #888;box-sizing:border-box;overflow:hidden;"></div>
<div style="left:1214.4px;top:193.4px;width:528px;height:43.2px;overflow:hidden;">
<span class="t" style="left:2.80px;top:13.00px;font-size:35.8px;color:#101010;font-family:'Liberation Sans',sans-serif;letter-spacing:-0.512px;-webkit-text-stroke:0.9px #fff;">Test Paginated Report</span>
</div>
<div style="left:1214.4px;top:241.8px;width:391.6px;height:1px;border-top:1.4px dotted #777;"></div>
<div style="left:1214.4px;top:270px;width:391.6px;height:1px;background:#d8d8d8;"></div>
<div style="left:1214.4px;top:299px;width:391.6px;height:1px;background:#d8d8d8;"></div>
<div style="left:1507.2px;top:299px;width:98.8px;height:1px;border-top:1px dotted #888;"></div>
<span class="t" style="left:1269.20px;top:248.00px;font-size:14.4px;color:#666;font-family:'Liberation Sans',sans-serif;font-weight:700;letter-spacing:0.144px;">email</span>
<span class="t" style="left:1217.40px;top:276.00px;font-size:13px;color:#333;font-family:'Liberation Sans',sans-serif;letter-spacing:0.068px;">[email]</span>
<div style="left:1311.5px;top:242px;width:1px;height:57.4px;border-left:1px dotted #888;"></div>
<span class="t" style="left:1366.00px;top:248.00px;font-size:14.4px;color:#666;font-family:'Liberation Sans',sans-serif;font-weight:700;letter-spacing:0.461px;">name</span>
<span class="t" style="left:1315.00px;top:276.00px;font-size:13px;color:#333;font-family:'Liberation Sans',sans-serif;letter-spacing:-0.069px;">[name]</span>
<div style="left:1409.9px;top:242px;width:1px;height:57.4px;border-left:1px dotted #888;"></div>
<span class="t" style="left:1432.20px;top:248.00px;font-size:14.4px;color:#666;font-family:'Liberation Sans',sans-serif;font-weight:700;letter-spacing:0.174px;">created at</span>
<span class="t" style="left:1413.40px;top:276.00px;font-size:13px;color:#333;font-family:'Liberation Sans',sans-serif;letter-spacing:-0.114px;">[created_at]</span>
<div style="left:1506.7px;top:242px;width:1px;height:57.4px;border-left:1px dotted #888;"></div>
<span class="t" style="left:1587.50px;top:248.00px;font-size:14.4px;color:#666;font-family:'Liberation Sans',sans-serif;font-weight:700;letter-spacing:-0.197px;">id</span>
<span class="t" style="left:1510.20px;top:276.00px;font-size:13px;color:#333;font-family:'Liberation Sans',sans-serif;letter-spacing:0.219px;">[id]</span>
<div style="left:1605.0px;top:242px;width:1px;height:57.4px;border-left:1px dotted #888;"></div>
<div style="left:1214.4px;top:409.2px;width:576px;height:1px;border-top:1px dotted #888;"></div>
<div style="left:1598px;top:428.4px;width:193px;height:23px;border-left:1px dotted #888;border-top:1px dotted #888;box-sizing:border-box;"></div>
<span class="t" style="left:1684.20px;top:434.00px;font-size:12.6px;color:#333;font-family:'Liberation Sans',sans-serif;letter-spacing:0.169px;">[&amp;ExecutionTime]</span>
<div style="left:1169px;top:857.2px;width:748px;height:149px;background:#222222;"></div>
<div style="left:1169px;top:882.6px;width:371.6px;height:121.6px;background:#fff;"></div>
<div style="left:1543.6px;top:882.6px;width:371px;height:121.6px;background:#fff;"></div>
<svg style="left:1171px;top:863.8px;" width="16.2" height="13.2" viewBox="0 0 16.2 13.2"><rect x="0" y="0" width="16.2" height="13.2" fill="#8a8a8a"/><rect x="1.0" y="1.00" width="4.1" height="2.1" fill="#ffffff"/><rect x="6.1" y="1.00" width="4.1" height="2.1" fill="#ffffff"/><rect x="11.2" y="1.00" width="4.1" height="2.1" fill="#ffffff"/><rect x="1.0" y="4.05" width="4.1" height="2.1" fill="#bcd3ee"/><rect x="6.1" y="4.05" width="4.1" height="2.1" fill="#bcd3ee"/><rect x="11.2" y="4.05" width="4.1" height="2.1" fill="#bcd3ee"/><rect x="1.0" y="7.10" width="4.1" height="2.1" fill="#ffffff"/><rect x="6.1" y="7.10" width="4.1" height="2.1" fill="#ffffff"/><rect x="11.2" y="7.10" width="4.1" height="2.1" fill="#ffffff"/><rect x="1.0" y="10.15" width="4.1" height="2.1" fill="#bcd3ee"/><rect x="6.1" y="10.15" width="4.1" height="2.1" fill="#bcd3ee"/><rect x="11.2" y="10.15" width="4.1" height="2.1" fill="#bcd3ee"/></svg>
<span class="t" style="left:1196.30px;top:867.00px;font-size:11.4px;color:#fff;font-family:'Liberation Sans',sans-serif;letter-spacing:0.038px;">Row Groups</span>
<svg style="left:1546.2px;top:863.8px;" width="16.2" height="13.2" viewBox="0 0 16.2 13.2"><rect x="0" y="0" width="16.2" height="13.2" fill="#8a8a8a"/><rect x="1.0" y="1.00" width="4.1" height="2.1" fill="#ffffff"/><rect x="6.1" y="1.00" width="4.1" height="2.1" fill="#bcd3ee"/><rect x="11.2" y="1.00" width="4.1" height="2.1" fill="#ffffff"/><rect x="1.0" y="4.05" width="4.1" height="2.1" fill="#ffffff"/><rect x="6.1" y="4.05" width="4.1" height="2.1" fill="#bcd3ee"/><rect x="11.2" y="4.05" width="4.1" height="2.1" fill="#ffffff"/><rect x="1.0" y="7.10" width="4.1" height="2.1" fill="#ffffff"/><rect x="6.1" y="7.10" width="4.1" height="2.1" fill="#bcd3ee"/><rect x="11.2" y="7.10" width="4.1" height="2.1" fill="#ffffff"/><rect x="1.0" y="10.15" width="4.1" height="2.1" fill="#ffffff"/><rect x="6.1" y="10.15" width="4.1" height="2.1" fill="#bcd3ee"/><rect x="11.2" y="10.15" width="4.1" height="2.1" fill="#ffffff"/></svg>
<span class="t" style="left:1571.60px;top:867.00px;font-size:11.4px;color:#fff;font-family:'Liberation Sans',sans-serif;letter-spacing:0.031px;">Column Groups</span>
<svg style="left:1901px;top:871px;" width="8" height="4.4" viewBox="0 0 8 4.4"><path d="M0 0 H8 L4 4.4 Z" fill="#bdbdbd"/></svg>
<div style="left:1170.5px;top:885.6px;width:368.0999999999999px;height:19.4px;background:#6a6a6a;border:1.2px solid #3b9bf5;box-sizing:border-box;border-radius:2px;"></div>
<div style="left:1519.2px;top:885.6px;width:1px;height:19.4px;background:#3b9bf5;"></div>
<svg style="left:1524.6px;top:893.6px;" width="7.6" height="4" viewBox="0 0 7.6 4"><path d="M0 0 H7.6 L3.8 4 Z" fill="#111"/></svg>
<svg style="left:1175.5px;top:890.2px;" width="3.4" height="9.4" viewBox="0 0 3.4 9.4"><path d="M3.2 0.5 H0.6 V8.9 H3.2" fill="none" stroke="#8c8c8c" stroke-width="1.1"/></svg>
<span class="t" style="left:1183.10px;top:889.00px;font-size:11.4px;color:#fff;font-family:'Liberation Sans',sans-serif;letter-spacing:0.039px;">email</span>
<div style="left:1186.4px;top:906.5px;width:352.1999999999998px;height:19.4px;background:#6a6a6a;border:1.2px solid #3b9bf5;box-sizing:border-box;border-radius:2px;"></div>
<div style="left:1519.2px;top:906.5px;width:1px;height:19.4px;background:#3b9bf5;"></div>
<svg style="left:1524.6px;top:914.5px;" width="7.6" height="4" viewBox="0 0 7.6 4"><path d="M0 0 H7.6 L3.8 4 Z" fill="#111"/></svg>
<svg style="left:1191.4px;top:911.1px;" width="3.4" height="9.4" viewBox="0 0 3.4 9.4"><path d="M3.2 0.5 H0.6 V8.9 H3.2" fill="none" stroke="#8c8c8c" stroke-width="1.1"/></svg>
<span class="t" style="left:1199.00px;top:910.00px;font-size:11.4px;color:#fff;font-family:'Liberation Sans',sans-serif;letter-spacing:-0.306px;">name</span>
<div style="left:1202.4px;top:927.6px;width:336.1999999999998px;height:19.4px;background:#6a6a6a;border:1.2px solid #3b9bf5;box-sizing:border-box;border-radius:2px;"></div>
<div style="left:1519.2px;top:927.6px;width:1px;height:19.4px;background:#3b9bf5;"></div>
<svg style="left:1524.6px;top:935.6px;" width="7.6" height="4" viewBox="0 0 7.6 4"><path d="M0 0 H7.6 L3.8 4 Z" fill="#111"/></svg>
<svg style="left:1207.4px;top:932.2px;" width="3.4" height="9.4" viewBox="0 0 3.4 9.4"><path d="M3.2 0.5 H0.6 V8.9 H3.2" fill="none" stroke="#8c8c8c" stroke-width="1.1"/></svg>
<span class="t" style="left:1215.00px;top:931.00px;font-size:11.4px;color:#fff;font-family:'Liberation Sans',sans-serif;letter-spacing:-0.097px;">created_at</span>
<div style="left:1218.2px;top:948.6px;width:320.39999999999986px;height:19.4px;background:#6a6a6a;border:1.2px solid #3b9bf5;box-sizing:border-box;border-radius:2px;"></div>
<div style="left:1519.2px;top:948.6px;width:1px;height:19.4px;background:#3b9bf5;"></div>
<svg style="left:1524.6px;top:956.6px;" width="7.6" height="4" viewBox="0 0 7.6 4"><path d="M0 0 H7.6 L3.8 4 Z" fill="#111"/></svg>
<svg style="left:1222.2px;top:955.6px;" width="5.4" height="5" viewBox="0 0 5.4 5"><path d="M0 0.5 H5.4 M0 2.5 H5.4 M0 4.5 H5.4" stroke="#8c8c8c" stroke-width="0.9"/></svg>
<span class="t" style="left:1230.80px;top:952.00px;font-size:11.4px;color:#fff;font-family:'Liberation Sans',sans-serif;letter-spacing:-0.130px;">(Details)</span>
<div style="left:963px;top:1008px;width:954px;height:21px;background:#2d2d2d;"></div>
<div style="left:963px;top:1004.2px;width:954px;height:3.8px;background:#222222;"></div>
<div style="left:960px;top:1029px;width:957px;height:3px;background:#3f3f3f;"></div>
<span class="t" style="left:971.30px;top:1013.00px;font-size:12.3px;color:#fff;font-family:'Liberation Sans',sans-serif;letter-spacing:-0.361px;">Power BI Report Builder</span>
<div style="left:1497.4px;top:1009.6px;width:19px;height:18.6px;background:#f4f4f4;"></div>
<svg style="left:1500.6px;top:1011.6px;" width="12" height="14" viewBox="0 0 12 14"><path d="M0.5 0.5 H8 L11 3.4 V13.5 H0.5 Z" fill="#fff" stroke="#666" stroke-width="0.9"/><path d="M1.6 4.4 L6.4 9.4 H1.6 Z" fill="#4a86d0"/><path d="M2 10.6 H9 M2 12.2 H9" stroke="#f09030" stroke-width="1"/><path d="M2 2.4 H6.6" stroke="#999" stroke-width="0.8"/></svg>
<div style="left:1517.4px;top:1009.6px;width:18.4px;height:18.6px;border:1px solid #3a3a3a;box-sizing:border-box;"></div>
<svg style="left:1520.4px;top:1011.6px;" width="12" height="13" viewBox="0 0 12 13"><path d="M0.5 0.5 H7.4 L9.6 2.8 V9.6 H0.5 Z" fill="#d8d8d8" stroke="#888" stroke-width="0.8"/><rect x="2.2" y="4.4" width="1.4" height="3.6" fill="#4a86d0"/><rect x="4.4" y="3.2" width="1.4" height="4.8" fill="#e09030"/><circle cx="8.4" cy="8.6" r="3.2" fill="#e8e8e8" stroke="#888" stroke-width="0.7"/><path d="M7.4 6.8 L10.2 8.6 L7.4 10.4 Z" fill="#4c9a6a"/></svg>
<span class="t" style="left:1545.30px;top:1014.00px;font-size:12.4px;color:#fff;font-family:'Liberation Sans',sans-serif;letter-spacing:-1.138px;">100%</span>
<div style="left:1585px;top:1016.2px;width:12.4px;height:3.6px;background:#fff;"></div>
<div style="left:1602.4px;top:1016.9px;width:102.6px;height:2.2px;background:#fff;"></div>
<div style="left:1651.8px;top:1014.8px;width:2.4px;height:7.8px;background:#fff;"></div>
<svg style="left:1710px;top:1012.4px;" width="12.6" height="12.6" viewBox="0 0 12.6 12.6"><path d="M6.3 0 V12.6 M0 6.3 H12.6" stroke="#fff" stroke-width="3.2"/></svg>
</div></body></html>
